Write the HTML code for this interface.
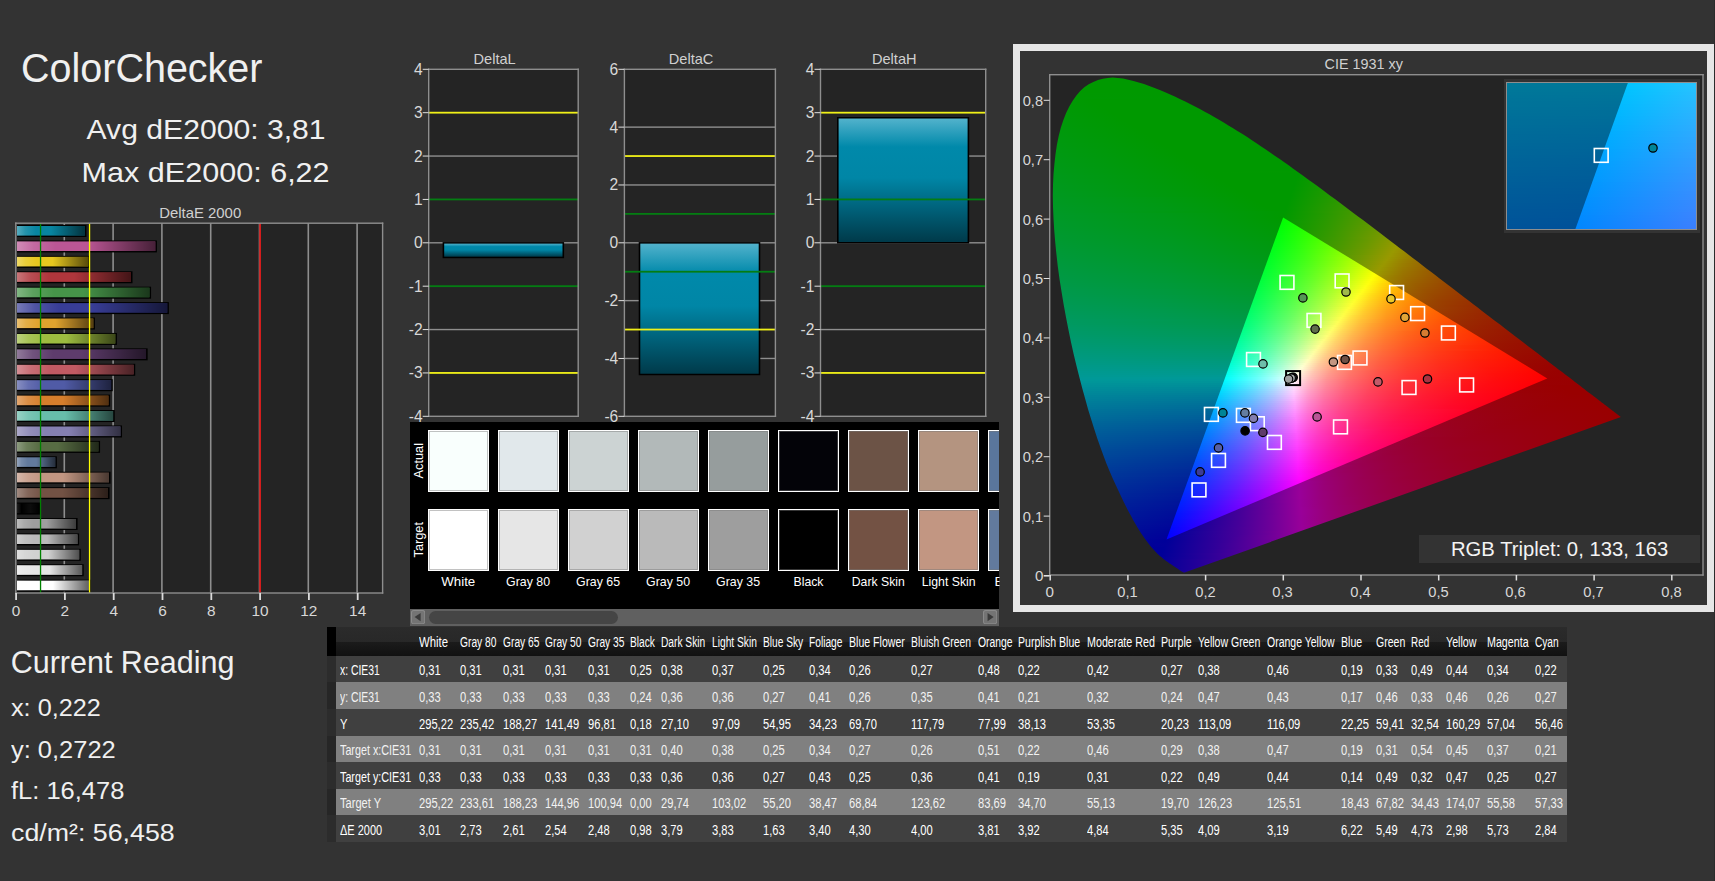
<!DOCTYPE html>
<html><head><meta charset="utf-8"><title>ColorChecker</title><style>
html,body{margin:0;padding:0}
body{width:1715px;height:881px;overflow:hidden;position:relative;background:#333333;font-family:"Liberation Sans",sans-serif;}
.t{position:absolute;white-space:pre;display:block}
.a{position:absolute;display:block}
.sw{position:absolute;width:60.5px;height:61.5px;box-sizing:border-box;border:1.3px solid #fff;box-shadow:inset 0 0 0 1px rgba(120,120,120,.45)}
.c{position:absolute;white-space:pre;font-size:15.2px;line-height:17.46px;transform:scaleX(0.735);transform-origin:0 0;color:#fff}
.g{position:absolute;left:0;top:0;width:653px;height:500px}.g i{display:block;height:2px}
.h{position:absolute;left:0;top:0;width:189.2px;height:146.5px;overflow:hidden}.h i{display:block;height:3px}
</style></head><body>
<span class="t" style="left:21.00px;top:45.60px;font-size:40px;line-height:45.96px;color:#f0f0f0;transform:scaleX(0.9876);transform-origin:0 0;">ColorChecker</span>
<span class="t" style="left:96.93px;top:114.31px;font-size:27.5px;line-height:31.60px;color:#f0f0f0;transform:scaleX(1.0956);transform-origin:50% 0;">Avg dE2000: 3,81</span>
<span class="t" style="left:94.40px;top:156.71px;font-size:27.5px;line-height:31.60px;color:#f0f0f0;transform:scaleX(1.1111);transform-origin:50% 0;">Max dE2000: 6,22</span>
<span class="t" style="left:159.50px;top:204.59px;font-size:14.6px;line-height:16.78px;color:#d0d0d0;transform:scaleX(1.0213);transform-origin:50% 0;">DeltaE 2000</span>
<span class="t" style="left:11.79px;top:602.06px;font-size:15.4px;line-height:17.69px;color:#d8d8d8;">0</span>
<span class="t" style="left:60.59px;top:602.06px;font-size:15.4px;line-height:17.69px;color:#d8d8d8;">2</span>
<span class="t" style="left:109.39px;top:602.06px;font-size:15.4px;line-height:17.69px;color:#d8d8d8;">4</span>
<span class="t" style="left:158.19px;top:602.06px;font-size:15.4px;line-height:17.69px;color:#d8d8d8;">6</span>
<span class="t" style="left:206.99px;top:602.06px;font-size:15.4px;line-height:17.69px;color:#d8d8d8;">8</span>
<span class="t" style="left:251.48px;top:602.06px;font-size:15.4px;line-height:17.69px;color:#d8d8d8;">10</span>
<span class="t" style="left:300.28px;top:602.06px;font-size:15.4px;line-height:17.69px;color:#d8d8d8;">12</span>
<span class="t" style="left:349.08px;top:602.06px;font-size:15.4px;line-height:17.69px;color:#d8d8d8;">14</span>
<span class="t" style="left:473.49px;top:50.99px;font-size:14.6px;line-height:16.78px;color:#d0d0d0;">DeltaL</span>
<span class="t" style="left:408.72px;top:407.78px;font-size:15.6px;line-height:17.92px;color:#d8d8d8;">-4</span>
<span class="t" style="left:408.72px;top:364.41px;font-size:15.6px;line-height:17.92px;color:#d8d8d8;">-3</span>
<span class="t" style="left:408.72px;top:321.03px;font-size:15.6px;line-height:17.92px;color:#d8d8d8;">-2</span>
<span class="t" style="left:408.72px;top:277.66px;font-size:15.6px;line-height:17.92px;color:#d8d8d8;">-1</span>
<span class="t" style="left:413.88px;top:234.28px;font-size:15.6px;line-height:17.92px;color:#d8d8d8;">0</span>
<span class="t" style="left:413.88px;top:190.91px;font-size:15.6px;line-height:17.92px;color:#d8d8d8;">1</span>
<span class="t" style="left:413.88px;top:147.53px;font-size:15.6px;line-height:17.92px;color:#d8d8d8;">2</span>
<span class="t" style="left:413.88px;top:104.16px;font-size:15.6px;line-height:17.92px;color:#d8d8d8;">3</span>
<span class="t" style="left:413.88px;top:60.78px;font-size:15.6px;line-height:17.92px;color:#d8d8d8;">4</span>
<span class="t" style="left:668.74px;top:50.99px;font-size:14.6px;line-height:16.78px;color:#d0d0d0;">DeltaC</span>
<span class="t" style="left:604.42px;top:407.78px;font-size:15.6px;line-height:17.92px;color:#d8d8d8;">-6</span>
<span class="t" style="left:604.42px;top:349.95px;font-size:15.6px;line-height:17.92px;color:#d8d8d8;">-4</span>
<span class="t" style="left:604.42px;top:292.12px;font-size:15.6px;line-height:17.92px;color:#d8d8d8;">-2</span>
<span class="t" style="left:609.58px;top:234.28px;font-size:15.6px;line-height:17.92px;color:#d8d8d8;">0</span>
<span class="t" style="left:609.58px;top:176.45px;font-size:15.6px;line-height:17.92px;color:#d8d8d8;">2</span>
<span class="t" style="left:609.58px;top:118.62px;font-size:15.6px;line-height:17.92px;color:#d8d8d8;">4</span>
<span class="t" style="left:609.58px;top:60.78px;font-size:15.6px;line-height:17.92px;color:#d8d8d8;">6</span>
<span class="t" style="left:871.94px;top:50.99px;font-size:14.6px;line-height:16.78px;color:#d0d0d0;">DeltaH</span>
<span class="t" style="left:800.52px;top:407.78px;font-size:15.6px;line-height:17.92px;color:#d8d8d8;">-4</span>
<span class="t" style="left:800.52px;top:364.41px;font-size:15.6px;line-height:17.92px;color:#d8d8d8;">-3</span>
<span class="t" style="left:800.52px;top:321.03px;font-size:15.6px;line-height:17.92px;color:#d8d8d8;">-2</span>
<span class="t" style="left:800.52px;top:277.66px;font-size:15.6px;line-height:17.92px;color:#d8d8d8;">-1</span>
<span class="t" style="left:805.68px;top:234.28px;font-size:15.6px;line-height:17.92px;color:#d8d8d8;">0</span>
<span class="t" style="left:805.68px;top:190.91px;font-size:15.6px;line-height:17.92px;color:#d8d8d8;">1</span>
<span class="t" style="left:805.68px;top:147.53px;font-size:15.6px;line-height:17.92px;color:#d8d8d8;">2</span>
<span class="t" style="left:805.68px;top:104.16px;font-size:15.6px;line-height:17.92px;color:#d8d8d8;">3</span>
<span class="t" style="left:805.68px;top:60.78px;font-size:15.6px;line-height:17.92px;color:#d8d8d8;">4</span>
<svg class="a" style="left:0;top:0" width="1715" height="881" viewBox="0 0 1715 881"><defs><linearGradient id="ov" x1="0" y1="0" x2="1" y2="0"><stop offset="0" stop-color="#fff" stop-opacity=".32"/><stop offset=".12" stop-color="#fff" stop-opacity=".12"/><stop offset=".28" stop-color="#fff" stop-opacity="0"/><stop offset=".5" stop-color="#000" stop-opacity="0"/><stop offset="1" stop-color="#000" stop-opacity=".62"/></linearGradient><linearGradient id="ovk" x1="0" y1="0" x2="1" y2="0"><stop offset="0" stop-color="#fff" stop-opacity=".12"/><stop offset=".2" stop-color="#fff" stop-opacity="0"/><stop offset=".6" stop-color="#fff" stop-opacity=".05"/><stop offset="1" stop-color="#fff" stop-opacity="0"/></linearGradient><linearGradient id="vb" x1="0" y1="0" x2="0" y2="1"><stop offset="0" stop-color="#52b2cc"/><stop offset=".23" stop-color="#0089aa"/><stop offset=".48" stop-color="#0086a6"/><stop offset="1" stop-color="#003a4a"/></linearGradient></defs><rect x="15.80" y="223.20" width="366.80" height="369.80" fill="#242424"/><rect x="63.50" y="223.20" width="1.60" height="369.80" fill="#8e8e8e"/><rect x="112.30" y="223.20" width="1.60" height="369.80" fill="#8e8e8e"/><rect x="161.10" y="223.20" width="1.60" height="369.80" fill="#8e8e8e"/><rect x="209.90" y="223.20" width="1.60" height="369.80" fill="#8e8e8e"/><rect x="258.70" y="223.20" width="1.60" height="369.80" fill="#8e8e8e"/><rect x="307.50" y="223.20" width="1.60" height="369.80" fill="#8e8e8e"/><rect x="356.30" y="223.20" width="1.60" height="369.80" fill="#8e8e8e"/><rect x="17.00" y="579.66" width="73.54" height="12.00" fill="#000"/><rect x="17.00" y="580.66" width="71.94" height="9.60" fill="#ffffff"/><rect x="17.00" y="580.66" width="71.94" height="9.60" fill="url(#ov)"/><rect x="17.00" y="564.24" width="66.71" height="12.00" fill="#000"/><rect x="17.00" y="565.24" width="65.11" height="9.60" fill="#e6e6e6"/><rect x="17.00" y="565.24" width="65.11" height="9.60" fill="url(#ov)"/><rect x="17.00" y="548.82" width="63.78" height="12.00" fill="#000"/><rect x="17.00" y="549.82" width="62.18" height="9.60" fill="#d1d1d1"/><rect x="17.00" y="549.82" width="62.18" height="9.60" fill="url(#ov)"/><rect x="17.00" y="533.40" width="62.08" height="12.00" fill="#000"/><rect x="17.00" y="534.40" width="60.48" height="9.60" fill="#bababa"/><rect x="17.00" y="534.40" width="60.48" height="9.60" fill="url(#ov)"/><rect x="17.00" y="517.98" width="60.61" height="12.00" fill="#000"/><rect x="17.00" y="518.98" width="59.01" height="9.60" fill="#9e9e9e"/><rect x="17.00" y="518.98" width="59.01" height="9.60" fill="url(#ov)"/><rect x="17.00" y="502.56" width="24.01" height="12.00" fill="#000"/><rect x="17.00" y="503.56" width="22.41" height="9.60" fill="#000000"/><rect x="17.00" y="503.56" width="22.41" height="9.60" fill="url(#ovk)"/><rect x="17.00" y="487.14" width="92.58" height="12.00" fill="#000"/><rect x="17.00" y="488.14" width="90.98" height="9.60" fill="#735244"/><rect x="17.00" y="488.14" width="90.98" height="9.60" fill="url(#ov)"/><rect x="17.00" y="471.72" width="93.55" height="12.00" fill="#000"/><rect x="17.00" y="472.72" width="91.95" height="9.60" fill="#c29682"/><rect x="17.00" y="472.72" width="91.95" height="9.60" fill="url(#ov)"/><rect x="17.00" y="456.30" width="39.87" height="12.00" fill="#000"/><rect x="17.00" y="457.30" width="38.27" height="9.60" fill="#627a9d"/><rect x="17.00" y="457.30" width="38.27" height="9.60" fill="url(#ov)"/><rect x="17.00" y="440.88" width="83.06" height="12.00" fill="#000"/><rect x="17.00" y="441.88" width="81.46" height="9.60" fill="#576c43"/><rect x="17.00" y="441.88" width="81.46" height="9.60" fill="url(#ov)"/><rect x="17.00" y="425.46" width="105.02" height="12.00" fill="#000"/><rect x="17.00" y="426.46" width="103.42" height="9.60" fill="#8580b1"/><rect x="17.00" y="426.46" width="103.42" height="9.60" fill="url(#ov)"/><rect x="17.00" y="410.04" width="97.70" height="12.00" fill="#000"/><rect x="17.00" y="411.04" width="96.10" height="9.60" fill="#67bdaa"/><rect x="17.00" y="411.04" width="96.10" height="9.60" fill="url(#ov)"/><rect x="17.00" y="394.62" width="93.06" height="12.00" fill="#000"/><rect x="17.00" y="395.62" width="91.46" height="9.60" fill="#d67e2c"/><rect x="17.00" y="395.62" width="91.46" height="9.60" fill="url(#ov)"/><rect x="17.00" y="379.20" width="95.75" height="12.00" fill="#000"/><rect x="17.00" y="380.20" width="94.15" height="9.60" fill="#505ba6"/><rect x="17.00" y="380.20" width="94.15" height="9.60" fill="url(#ov)"/><rect x="17.00" y="363.78" width="118.20" height="12.00" fill="#000"/><rect x="17.00" y="364.78" width="116.60" height="9.60" fill="#c15a63"/><rect x="17.00" y="364.78" width="116.60" height="9.60" fill="url(#ov)"/><rect x="17.00" y="348.36" width="130.64" height="12.00" fill="#000"/><rect x="17.00" y="349.36" width="129.04" height="9.60" fill="#5e3c6c"/><rect x="17.00" y="349.36" width="129.04" height="9.60" fill="url(#ov)"/><rect x="17.00" y="332.94" width="99.90" height="12.00" fill="#000"/><rect x="17.00" y="333.94" width="98.30" height="9.60" fill="#9dbc40"/><rect x="17.00" y="333.94" width="98.30" height="9.60" fill="url(#ov)"/><rect x="17.00" y="317.52" width="77.94" height="12.00" fill="#000"/><rect x="17.00" y="318.52" width="76.34" height="9.60" fill="#e0a32e"/><rect x="17.00" y="318.52" width="76.34" height="9.60" fill="url(#ov)"/><rect x="17.00" y="302.10" width="151.87" height="12.00" fill="#000"/><rect x="17.00" y="303.10" width="150.27" height="9.60" fill="#383d96"/><rect x="17.00" y="303.10" width="150.27" height="9.60" fill="url(#ov)"/><rect x="17.00" y="286.68" width="134.06" height="12.00" fill="#000"/><rect x="17.00" y="287.68" width="132.46" height="9.60" fill="#469449"/><rect x="17.00" y="287.68" width="132.46" height="9.60" fill="url(#ov)"/><rect x="17.00" y="271.26" width="115.51" height="12.00" fill="#000"/><rect x="17.00" y="272.26" width="113.91" height="9.60" fill="#af363c"/><rect x="17.00" y="272.26" width="113.91" height="9.60" fill="url(#ov)"/><rect x="17.00" y="255.84" width="72.81" height="12.00" fill="#000"/><rect x="17.00" y="256.84" width="71.21" height="9.60" fill="#e7c71f"/><rect x="17.00" y="256.84" width="71.21" height="9.60" fill="url(#ov)"/><rect x="17.00" y="240.42" width="139.91" height="12.00" fill="#000"/><rect x="17.00" y="241.42" width="138.31" height="9.60" fill="#bb5695"/><rect x="17.00" y="241.42" width="138.31" height="9.60" fill="url(#ov)"/><rect x="17.00" y="225.00" width="69.40" height="12.00" fill="#000"/><rect x="17.00" y="226.00" width="67.80" height="9.60" fill="#0885a1"/><rect x="17.00" y="226.00" width="67.80" height="9.60" fill="url(#ov)"/><rect x="39.90" y="223.20" width="1.30" height="369.80" fill="#008000"/><rect x="88.90" y="223.20" width="1.30" height="369.80" fill="#ffff00"/><rect x="259.20" y="223.20" width="1.80" height="369.80" fill="#d41c1c"/><rect x="15.10" y="222.50" width="368.20" height="1.40" fill="#8e8e8e"/><rect x="15.10" y="592.30" width="368.20" height="1.40" fill="#8e8e8e"/><rect x="15.10" y="222.50" width="1.40" height="371.20" fill="#8e8e8e"/><rect x="381.90" y="222.50" width="1.40" height="371.20" fill="#8e8e8e"/><rect x="15.20" y="593.00" width="1.80" height="7.00" fill="#dcdcdc"/><rect x="64.00" y="593.00" width="1.80" height="7.00" fill="#dcdcdc"/><rect x="112.80" y="593.00" width="1.80" height="7.00" fill="#dcdcdc"/><rect x="161.60" y="593.00" width="1.80" height="7.00" fill="#dcdcdc"/><rect x="210.40" y="593.00" width="1.80" height="7.00" fill="#dcdcdc"/><rect x="259.20" y="593.00" width="1.80" height="7.00" fill="#dcdcdc"/><rect x="308.00" y="593.00" width="1.80" height="7.00" fill="#dcdcdc"/><rect x="356.80" y="593.00" width="1.80" height="7.00" fill="#dcdcdc"/><rect x="428.70" y="69.30" width="149.50" height="347.00" fill="#242424"/><rect x="428.70" y="155.35" width="149.50" height="1.40" fill="#8e8e8e"/><rect x="428.70" y="242.10" width="149.50" height="1.40" fill="#8e8e8e"/><rect x="428.70" y="328.85" width="149.50" height="1.40" fill="#8e8e8e"/><rect x="442.60" y="242.10" width="121.50" height="16.10" fill="#000"/><rect x="444.20" y="243.60" width="118.30" height="13.10" fill="url(#vb)"/><rect x="428.70" y="111.78" width="149.50" height="1.80" fill="#f0f018"/><rect x="428.70" y="372.03" width="149.50" height="1.80" fill="#f0f018"/><rect x="428.70" y="198.53" width="149.50" height="1.80" fill="#047d12"/><rect x="428.70" y="285.28" width="149.50" height="1.80" fill="#047d12"/><rect x="428.00" y="68.60" width="150.90" height="1.40" fill="#8e8e8e"/><rect x="428.00" y="415.60" width="150.90" height="1.40" fill="#8e8e8e"/><rect x="428.00" y="68.60" width="1.40" height="348.40" fill="#8e8e8e"/><rect x="577.50" y="68.60" width="1.40" height="348.40" fill="#8e8e8e"/><rect x="422.70" y="415.80" width="6.00" height="1.00" fill="#e0e0e0"/><rect x="422.70" y="372.43" width="6.00" height="1.00" fill="#e0e0e0"/><rect x="422.70" y="329.05" width="6.00" height="1.00" fill="#e0e0e0"/><rect x="422.70" y="285.68" width="6.00" height="1.00" fill="#e0e0e0"/><rect x="422.70" y="242.30" width="6.00" height="1.00" fill="#e0e0e0"/><rect x="422.70" y="198.93" width="6.00" height="1.00" fill="#e0e0e0"/><rect x="422.70" y="155.55" width="6.00" height="1.00" fill="#e0e0e0"/><rect x="422.70" y="112.18" width="6.00" height="1.00" fill="#e0e0e0"/><rect x="422.70" y="68.80" width="6.00" height="1.00" fill="#e0e0e0"/><rect x="624.40" y="69.30" width="151.00" height="347.00" fill="#242424"/><rect x="624.40" y="126.43" width="151.00" height="1.40" fill="#8e8e8e"/><rect x="624.40" y="184.27" width="151.00" height="1.40" fill="#8e8e8e"/><rect x="624.40" y="242.10" width="151.00" height="1.40" fill="#8e8e8e"/><rect x="624.40" y="299.93" width="151.00" height="1.40" fill="#8e8e8e"/><rect x="624.40" y="357.77" width="151.00" height="1.40" fill="#8e8e8e"/><rect x="638.70" y="242.10" width="121.60" height="133.14" fill="#000"/><rect x="640.30" y="243.60" width="118.40" height="130.14" fill="url(#vb)"/><rect x="624.40" y="155.15" width="151.00" height="1.80" fill="#f0f018"/><rect x="624.40" y="328.65" width="151.00" height="1.80" fill="#f0f018"/><rect x="624.40" y="212.98" width="151.00" height="1.80" fill="#047d12"/><rect x="624.40" y="270.82" width="151.00" height="1.80" fill="#047d12"/><rect x="623.70" y="68.60" width="152.40" height="1.40" fill="#8e8e8e"/><rect x="623.70" y="415.60" width="152.40" height="1.40" fill="#8e8e8e"/><rect x="623.70" y="68.60" width="1.40" height="348.40" fill="#8e8e8e"/><rect x="774.70" y="68.60" width="1.40" height="348.40" fill="#8e8e8e"/><rect x="618.40" y="415.80" width="6.00" height="1.00" fill="#e0e0e0"/><rect x="618.40" y="357.97" width="6.00" height="1.00" fill="#e0e0e0"/><rect x="618.40" y="300.13" width="6.00" height="1.00" fill="#e0e0e0"/><rect x="618.40" y="242.30" width="6.00" height="1.00" fill="#e0e0e0"/><rect x="618.40" y="184.47" width="6.00" height="1.00" fill="#e0e0e0"/><rect x="618.40" y="126.63" width="6.00" height="1.00" fill="#e0e0e0"/><rect x="618.40" y="68.80" width="6.00" height="1.00" fill="#e0e0e0"/><rect x="820.50" y="69.30" width="165.20" height="347.00" fill="#242424"/><rect x="820.50" y="155.35" width="165.20" height="1.40" fill="#8e8e8e"/><rect x="820.50" y="242.10" width="165.20" height="1.40" fill="#8e8e8e"/><rect x="820.50" y="328.85" width="165.20" height="1.40" fill="#8e8e8e"/><rect x="837.00" y="117.01" width="132.20" height="126.49" fill="#000"/><rect x="838.60" y="118.51" width="129.00" height="123.49" fill="url(#vb)"/><rect x="820.50" y="111.78" width="165.20" height="1.80" fill="#f0f018"/><rect x="820.50" y="372.03" width="165.20" height="1.80" fill="#f0f018"/><rect x="820.50" y="198.53" width="165.20" height="1.80" fill="#047d12"/><rect x="820.50" y="285.28" width="165.20" height="1.80" fill="#047d12"/><rect x="819.80" y="68.60" width="166.60" height="1.40" fill="#8e8e8e"/><rect x="819.80" y="415.60" width="166.60" height="1.40" fill="#8e8e8e"/><rect x="819.80" y="68.60" width="1.40" height="348.40" fill="#8e8e8e"/><rect x="985.00" y="68.60" width="1.40" height="348.40" fill="#8e8e8e"/><rect x="814.50" y="415.80" width="6.00" height="1.00" fill="#e0e0e0"/><rect x="814.50" y="372.43" width="6.00" height="1.00" fill="#e0e0e0"/><rect x="814.50" y="329.05" width="6.00" height="1.00" fill="#e0e0e0"/><rect x="814.50" y="285.68" width="6.00" height="1.00" fill="#e0e0e0"/><rect x="814.50" y="242.30" width="6.00" height="1.00" fill="#e0e0e0"/><rect x="814.50" y="198.93" width="6.00" height="1.00" fill="#e0e0e0"/><rect x="814.50" y="155.55" width="6.00" height="1.00" fill="#e0e0e0"/><rect x="814.50" y="112.18" width="6.00" height="1.00" fill="#e0e0e0"/><rect x="814.50" y="68.80" width="6.00" height="1.00" fill="#e0e0e0"/></svg>
<div class="a" style="left:410px;top:422px;width:589px;height:204px;background:#000;overflow:hidden">
<div class="sw" style="left:18.0px;top:8px;background:rgb(249, 255, 253)"></div>
<div class="sw" style="left:18.0px;top:87.3px;background:rgb(255, 255, 255)"></div>
<div class="sw" style="left:88.0px;top:8px;background:rgb(225, 232, 235)"></div>
<div class="sw" style="left:88.0px;top:87.3px;background:rgb(230, 230, 230)"></div>
<div class="sw" style="left:158.1px;top:8px;background:rgb(204, 211, 211)"></div>
<div class="sw" style="left:158.1px;top:87.3px;background:rgb(209, 209, 209)"></div>
<div class="sw" style="left:228.1px;top:8px;background:rgb(178, 185, 185)"></div>
<div class="sw" style="left:228.1px;top:87.3px;background:rgb(186, 186, 186)"></div>
<div class="sw" style="left:298.2px;top:8px;background:rgb(150, 157, 157)"></div>
<div class="sw" style="left:298.2px;top:87.3px;background:rgb(158, 158, 158)"></div>
<div class="sw" style="left:368.2px;top:8px;background:rgb(3, 3, 8)"></div>
<div class="sw" style="left:368.2px;top:87.3px;background:rgb(0, 0, 0)"></div>
<div class="sw" style="left:438.3px;top:8px;background:rgb(108, 83, 70)"></div>
<div class="sw" style="left:438.3px;top:87.3px;background:rgb(115, 82, 68)"></div>
<div class="sw" style="left:508.3px;top:8px;background:rgb(180, 148, 128)"></div>
<div class="sw" style="left:508.3px;top:87.3px;background:rgb(194, 150, 130)"></div>
<div class="sw" style="left:578.4px;top:8px;background:rgb(90, 118, 156)"></div>
<div class="sw" style="left:578.4px;top:87.3px;background:rgb(98, 122, 157)"></div>
</div>
<span class="t" style="left:441.05px;top:573.78px;font-size:13.5px;line-height:15.51px;color:#fff;transform:scaleX(0.9853);transform-origin:50% 0;">White</span>
<span class="t" style="left:504.34px;top:573.78px;font-size:13.5px;line-height:15.51px;color:#fff;transform:scaleX(0.9163);transform-origin:50% 0;">Gray 80</span>
<span class="t" style="left:574.39px;top:573.78px;font-size:13.5px;line-height:15.51px;color:#fff;transform:scaleX(0.9163);transform-origin:50% 0;">Gray 65</span>
<span class="t" style="left:644.44px;top:573.78px;font-size:13.5px;line-height:15.51px;color:#fff;transform:scaleX(0.9163);transform-origin:50% 0;">Gray 50</span>
<span class="t" style="left:714.49px;top:573.78px;font-size:13.5px;line-height:15.51px;color:#fff;transform:scaleX(0.9163);transform-origin:50% 0;">Gray 35</span>
<span class="t" style="left:792.04px;top:573.78px;font-size:13.5px;line-height:15.51px;color:#fff;transform:scaleX(0.9088);transform-origin:50% 0;">Black</span>
<span class="t" style="left:849.34px;top:573.78px;font-size:13.5px;line-height:15.51px;color:#fff;transform:scaleX(0.9057);transform-origin:50% 0;">Dark Skin</span>
<span class="t" style="left:919.01px;top:573.78px;font-size:13.5px;line-height:15.51px;color:#fff;transform:scaleX(0.9109);transform-origin:50% 0;">Light Skin</span>
<span class="t" style="left:994.50px;top:573.78px;font-size:13.5px;line-height:15.51px;color:#fff;clip-path:inset(0 4px 0 0);">E</span>
<span class="t" style="left:400.04px;top:453.24px;font-size:13.5px;line-height:15.51px;color:#fff;transform:rotate(-90deg) scaleX(0.946);transform-origin:50% 50%">Actual</span>
<span class="t" style="left:400.04px;top:532.24px;font-size:13.5px;line-height:15.51px;color:#fff;transform:rotate(-90deg) scaleX(0.946);transform-origin:50% 50%">Target</span>
<div class="a" style="left:410px;top:609px;width:589px;height:17px;background:#606060"></div>
<div class="a" style="left:428.5px;top:610.5px;width:189px;height:13.6px;background:#454545;border-radius:7px"></div>
<svg class="a" style="left:410.8px;top:610.2px" width="14.2" height="14.2" viewBox="0 0 14 14"><rect x="0.5" y="0.5" width="13" height="13" rx="2" fill="#747474" stroke="#8a8a8a"/><polygon points="9.5,3 9.5,11 3.5,7" fill="#3a3a3a"/></svg>
<svg class="a" style="left:982.9px;top:610.2px" width="14.2" height="14.2" viewBox="0 0 14 14"><rect x="0.5" y="0.5" width="13" height="13" rx="2" fill="#747474" stroke="#8a8a8a"/><polygon points="4.5,3 4.5,11 10.5,7" fill="#3a3a3a"/></svg>
<div class="a" style="left:327.0px;top:627.0px;width:1239.7px;height:28.9px;background:linear-gradient(180deg,#2b2b2b 0,#282828 51%,#1b1b1b 52%,#111 100%)"></div>
<div class="a" style="left:327.0px;top:627.0px;width:9px;height:28.9px;background:#000"></div>
<span class="c" style="left:419.2px;top:633.44px;transform:scaleX(0.7465)">White</span>
<span class="c" style="left:460.2px;top:633.44px;transform:scaleX(0.6747)">Gray 80</span>
<span class="c" style="left:502.8px;top:633.44px;transform:scaleX(0.6747)">Gray 65</span>
<span class="c" style="left:545.2px;top:633.44px;transform:scaleX(0.6747)">Gray 50</span>
<span class="c" style="left:587.6px;top:633.44px;transform:scaleX(0.6747)">Gray 35</span>
<span class="c" style="left:630.2px;top:633.44px;transform:scaleX(0.6704)">Black</span>
<span class="c" style="left:661.1px;top:633.44px;transform:scaleX(0.6717)">Dark Skin</span>
<span class="c" style="left:711.8px;top:633.44px;transform:scaleX(0.6734)">Light Skin</span>
<span class="c" style="left:763.3px;top:633.44px;transform:scaleX(0.6697)">Blue Sky</span>
<span class="c" style="left:809.2px;top:633.44px;transform:scaleX(0.6718)">Foliage</span>
<span class="c" style="left:848.7px;top:633.44px;transform:scaleX(0.6956)">Blue Flower</span>
<span class="c" style="left:911.1px;top:633.44px;transform:scaleX(0.6829)">Bluish Green</span>
<span class="c" style="left:977.7px;top:633.44px;transform:scaleX(0.6822)">Orange</span>
<span class="c" style="left:1018.3px;top:633.44px;transform:scaleX(0.6945)">Purplish Blue</span>
<span class="c" style="left:1086.7px;top:633.44px;transform:scaleX(0.7058)">Moderate Red</span>
<span class="c" style="left:1161.3px;top:633.44px;transform:scaleX(0.7010)">Purple</span>
<span class="c" style="left:1198.3px;top:633.44px;transform:scaleX(0.6934)">Yellow Green</span>
<span class="c" style="left:1266.8px;top:633.44px;transform:scaleX(0.6904)">Orange Yellow</span>
<span class="c" style="left:1340.8px;top:633.44px;transform:scaleX(0.6946)">Blue</span>
<span class="c" style="left:1375.6px;top:633.44px;transform:scaleX(0.6937)">Green</span>
<span class="c" style="left:1410.5px;top:633.44px;transform:scaleX(0.6506)">Red</span>
<span class="c" style="left:1445.7px;top:633.44px;transform:scaleX(0.7031)">Yellow</span>
<span class="c" style="left:1486.9px;top:633.44px;transform:scaleX(0.7044)">Magenta</span>
<span class="c" style="left:1534.8px;top:633.44px;transform:scaleX(0.6658)">Cyan</span>
<div class="a" style="left:327.0px;top:655.90px;width:1239.7px;height:26.57px;background:#404040"></div>
<div class="a" style="left:327.0px;top:655.90px;width:9px;height:26.57px;background:#2c2c2c"></div>
<span class="c" style="left:339.6px;top:661.44px;color:#fff;transform:scaleX(0.6822)">x: CIE31</span>
<span class="c" style="left:419.2px;top:661.44px;color:#fff">0,31</span>
<span class="c" style="left:460.2px;top:661.44px;color:#fff">0,31</span>
<span class="c" style="left:502.8px;top:661.44px;color:#fff">0,31</span>
<span class="c" style="left:545.2px;top:661.44px;color:#fff">0,31</span>
<span class="c" style="left:587.6px;top:661.44px;color:#fff">0,31</span>
<span class="c" style="left:630.2px;top:661.44px;color:#fff">0,25</span>
<span class="c" style="left:661.1px;top:661.44px;color:#fff">0,38</span>
<span class="c" style="left:711.8px;top:661.44px;color:#fff">0,37</span>
<span class="c" style="left:763.3px;top:661.44px;color:#fff">0,25</span>
<span class="c" style="left:809.2px;top:661.44px;color:#fff">0,34</span>
<span class="c" style="left:848.7px;top:661.44px;color:#fff">0,26</span>
<span class="c" style="left:911.1px;top:661.44px;color:#fff">0,27</span>
<span class="c" style="left:977.7px;top:661.44px;color:#fff">0,48</span>
<span class="c" style="left:1018.3px;top:661.44px;color:#fff">0,22</span>
<span class="c" style="left:1086.7px;top:661.44px;color:#fff">0,42</span>
<span class="c" style="left:1161.3px;top:661.44px;color:#fff">0,27</span>
<span class="c" style="left:1198.3px;top:661.44px;color:#fff">0,38</span>
<span class="c" style="left:1266.8px;top:661.44px;color:#fff">0,46</span>
<span class="c" style="left:1340.8px;top:661.44px;color:#fff">0,19</span>
<span class="c" style="left:1375.6px;top:661.44px;color:#fff">0,33</span>
<span class="c" style="left:1410.5px;top:661.44px;color:#fff">0,49</span>
<span class="c" style="left:1445.7px;top:661.44px;color:#fff">0,44</span>
<span class="c" style="left:1486.9px;top:661.44px;color:#fff">0,34</span>
<span class="c" style="left:1534.8px;top:661.44px;color:#fff">0,22</span>
<div class="a" style="left:327.0px;top:682.47px;width:1239.7px;height:26.57px;background:#808080"></div>
<div class="a" style="left:327.0px;top:682.47px;width:9px;height:26.57px;background:#262626"></div>
<span class="c" style="left:339.6px;top:688.01px;color:#f2f2f2;transform:scaleX(0.6822)">y: CIE31</span>
<span class="c" style="left:419.2px;top:688.01px;color:#f2f2f2">0,33</span>
<span class="c" style="left:460.2px;top:688.01px;color:#f2f2f2">0,33</span>
<span class="c" style="left:502.8px;top:688.01px;color:#f2f2f2">0,33</span>
<span class="c" style="left:545.2px;top:688.01px;color:#f2f2f2">0,33</span>
<span class="c" style="left:587.6px;top:688.01px;color:#f2f2f2">0,33</span>
<span class="c" style="left:630.2px;top:688.01px;color:#f2f2f2">0,24</span>
<span class="c" style="left:661.1px;top:688.01px;color:#f2f2f2">0,36</span>
<span class="c" style="left:711.8px;top:688.01px;color:#f2f2f2">0,36</span>
<span class="c" style="left:763.3px;top:688.01px;color:#f2f2f2">0,27</span>
<span class="c" style="left:809.2px;top:688.01px;color:#f2f2f2">0,41</span>
<span class="c" style="left:848.7px;top:688.01px;color:#f2f2f2">0,26</span>
<span class="c" style="left:911.1px;top:688.01px;color:#f2f2f2">0,35</span>
<span class="c" style="left:977.7px;top:688.01px;color:#f2f2f2">0,41</span>
<span class="c" style="left:1018.3px;top:688.01px;color:#f2f2f2">0,21</span>
<span class="c" style="left:1086.7px;top:688.01px;color:#f2f2f2">0,32</span>
<span class="c" style="left:1161.3px;top:688.01px;color:#f2f2f2">0,24</span>
<span class="c" style="left:1198.3px;top:688.01px;color:#f2f2f2">0,47</span>
<span class="c" style="left:1266.8px;top:688.01px;color:#f2f2f2">0,43</span>
<span class="c" style="left:1340.8px;top:688.01px;color:#f2f2f2">0,17</span>
<span class="c" style="left:1375.6px;top:688.01px;color:#f2f2f2">0,46</span>
<span class="c" style="left:1410.5px;top:688.01px;color:#f2f2f2">0,33</span>
<span class="c" style="left:1445.7px;top:688.01px;color:#f2f2f2">0,46</span>
<span class="c" style="left:1486.9px;top:688.01px;color:#f2f2f2">0,26</span>
<span class="c" style="left:1534.8px;top:688.01px;color:#f2f2f2">0,27</span>
<div class="a" style="left:327.0px;top:709.04px;width:1239.7px;height:26.57px;background:#404040"></div>
<div class="a" style="left:327.0px;top:709.04px;width:9px;height:26.57px;background:#2c2c2c"></div>
<span class="c" style="left:339.6px;top:714.58px;color:#fff">Y</span>
<span class="c" style="left:419.2px;top:714.58px;color:#fff">295,22</span>
<span class="c" style="left:460.2px;top:714.58px;color:#fff">235,42</span>
<span class="c" style="left:502.8px;top:714.58px;color:#fff">188,27</span>
<span class="c" style="left:545.2px;top:714.58px;color:#fff">141,49</span>
<span class="c" style="left:587.6px;top:714.58px;color:#fff">96,81</span>
<span class="c" style="left:630.2px;top:714.58px;color:#fff">0,18</span>
<span class="c" style="left:661.1px;top:714.58px;color:#fff">27,10</span>
<span class="c" style="left:711.8px;top:714.58px;color:#fff">97,09</span>
<span class="c" style="left:763.3px;top:714.58px;color:#fff">54,95</span>
<span class="c" style="left:809.2px;top:714.58px;color:#fff">34,23</span>
<span class="c" style="left:848.7px;top:714.58px;color:#fff">69,70</span>
<span class="c" style="left:911.1px;top:714.58px;color:#fff">117,79</span>
<span class="c" style="left:977.7px;top:714.58px;color:#fff">77,99</span>
<span class="c" style="left:1018.3px;top:714.58px;color:#fff">38,13</span>
<span class="c" style="left:1086.7px;top:714.58px;color:#fff">53,35</span>
<span class="c" style="left:1161.3px;top:714.58px;color:#fff">20,23</span>
<span class="c" style="left:1198.3px;top:714.58px;color:#fff">113,09</span>
<span class="c" style="left:1266.8px;top:714.58px;color:#fff">116,09</span>
<span class="c" style="left:1340.8px;top:714.58px;color:#fff">22,25</span>
<span class="c" style="left:1375.6px;top:714.58px;color:#fff">59,41</span>
<span class="c" style="left:1410.5px;top:714.58px;color:#fff">32,54</span>
<span class="c" style="left:1445.7px;top:714.58px;color:#fff">160,29</span>
<span class="c" style="left:1486.9px;top:714.58px;color:#fff">57,04</span>
<span class="c" style="left:1534.8px;top:714.58px;color:#fff">56,46</span>
<div class="a" style="left:327.0px;top:735.61px;width:1239.7px;height:26.57px;background:#808080"></div>
<div class="a" style="left:327.0px;top:735.61px;width:9px;height:26.57px;background:#262626"></div>
<span class="c" style="left:339.6px;top:741.15px;color:#f2f2f2;transform:scaleX(0.7089)">Target x:CIE31</span>
<span class="c" style="left:419.2px;top:741.15px;color:#f2f2f2">0,31</span>
<span class="c" style="left:460.2px;top:741.15px;color:#f2f2f2">0,31</span>
<span class="c" style="left:502.8px;top:741.15px;color:#f2f2f2">0,31</span>
<span class="c" style="left:545.2px;top:741.15px;color:#f2f2f2">0,31</span>
<span class="c" style="left:587.6px;top:741.15px;color:#f2f2f2">0,31</span>
<span class="c" style="left:630.2px;top:741.15px;color:#f2f2f2">0,31</span>
<span class="c" style="left:661.1px;top:741.15px;color:#f2f2f2">0,40</span>
<span class="c" style="left:711.8px;top:741.15px;color:#f2f2f2">0,38</span>
<span class="c" style="left:763.3px;top:741.15px;color:#f2f2f2">0,25</span>
<span class="c" style="left:809.2px;top:741.15px;color:#f2f2f2">0,34</span>
<span class="c" style="left:848.7px;top:741.15px;color:#f2f2f2">0,27</span>
<span class="c" style="left:911.1px;top:741.15px;color:#f2f2f2">0,26</span>
<span class="c" style="left:977.7px;top:741.15px;color:#f2f2f2">0,51</span>
<span class="c" style="left:1018.3px;top:741.15px;color:#f2f2f2">0,22</span>
<span class="c" style="left:1086.7px;top:741.15px;color:#f2f2f2">0,46</span>
<span class="c" style="left:1161.3px;top:741.15px;color:#f2f2f2">0,29</span>
<span class="c" style="left:1198.3px;top:741.15px;color:#f2f2f2">0,38</span>
<span class="c" style="left:1266.8px;top:741.15px;color:#f2f2f2">0,47</span>
<span class="c" style="left:1340.8px;top:741.15px;color:#f2f2f2">0,19</span>
<span class="c" style="left:1375.6px;top:741.15px;color:#f2f2f2">0,31</span>
<span class="c" style="left:1410.5px;top:741.15px;color:#f2f2f2">0,54</span>
<span class="c" style="left:1445.7px;top:741.15px;color:#f2f2f2">0,45</span>
<span class="c" style="left:1486.9px;top:741.15px;color:#f2f2f2">0,37</span>
<span class="c" style="left:1534.8px;top:741.15px;color:#f2f2f2">0,21</span>
<div class="a" style="left:327.0px;top:762.18px;width:1239.7px;height:26.57px;background:#404040"></div>
<div class="a" style="left:327.0px;top:762.18px;width:9px;height:26.57px;background:#2c2c2c"></div>
<span class="c" style="left:339.6px;top:767.72px;color:#fff;transform:scaleX(0.7089)">Target y:CIE31</span>
<span class="c" style="left:419.2px;top:767.72px;color:#fff">0,33</span>
<span class="c" style="left:460.2px;top:767.72px;color:#fff">0,33</span>
<span class="c" style="left:502.8px;top:767.72px;color:#fff">0,33</span>
<span class="c" style="left:545.2px;top:767.72px;color:#fff">0,33</span>
<span class="c" style="left:587.6px;top:767.72px;color:#fff">0,33</span>
<span class="c" style="left:630.2px;top:767.72px;color:#fff">0,33</span>
<span class="c" style="left:661.1px;top:767.72px;color:#fff">0,36</span>
<span class="c" style="left:711.8px;top:767.72px;color:#fff">0,36</span>
<span class="c" style="left:763.3px;top:767.72px;color:#fff">0,27</span>
<span class="c" style="left:809.2px;top:767.72px;color:#fff">0,43</span>
<span class="c" style="left:848.7px;top:767.72px;color:#fff">0,25</span>
<span class="c" style="left:911.1px;top:767.72px;color:#fff">0,36</span>
<span class="c" style="left:977.7px;top:767.72px;color:#fff">0,41</span>
<span class="c" style="left:1018.3px;top:767.72px;color:#fff">0,19</span>
<span class="c" style="left:1086.7px;top:767.72px;color:#fff">0,31</span>
<span class="c" style="left:1161.3px;top:767.72px;color:#fff">0,22</span>
<span class="c" style="left:1198.3px;top:767.72px;color:#fff">0,49</span>
<span class="c" style="left:1266.8px;top:767.72px;color:#fff">0,44</span>
<span class="c" style="left:1340.8px;top:767.72px;color:#fff">0,14</span>
<span class="c" style="left:1375.6px;top:767.72px;color:#fff">0,49</span>
<span class="c" style="left:1410.5px;top:767.72px;color:#fff">0,32</span>
<span class="c" style="left:1445.7px;top:767.72px;color:#fff">0,47</span>
<span class="c" style="left:1486.9px;top:767.72px;color:#fff">0,25</span>
<span class="c" style="left:1534.8px;top:767.72px;color:#fff">0,27</span>
<div class="a" style="left:327.0px;top:788.75px;width:1239.7px;height:26.57px;background:#808080"></div>
<div class="a" style="left:327.0px;top:788.75px;width:9px;height:26.57px;background:#262626"></div>
<span class="c" style="left:339.6px;top:794.29px;color:#f2f2f2;transform:scaleX(0.7290)">Target Y</span>
<span class="c" style="left:419.2px;top:794.29px;color:#f2f2f2">295,22</span>
<span class="c" style="left:460.2px;top:794.29px;color:#f2f2f2">233,61</span>
<span class="c" style="left:502.8px;top:794.29px;color:#f2f2f2">188,23</span>
<span class="c" style="left:545.2px;top:794.29px;color:#f2f2f2">144,96</span>
<span class="c" style="left:587.6px;top:794.29px;color:#f2f2f2">100,94</span>
<span class="c" style="left:630.2px;top:794.29px;color:#f2f2f2">0,00</span>
<span class="c" style="left:661.1px;top:794.29px;color:#f2f2f2">29,74</span>
<span class="c" style="left:711.8px;top:794.29px;color:#f2f2f2">103,02</span>
<span class="c" style="left:763.3px;top:794.29px;color:#f2f2f2">55,20</span>
<span class="c" style="left:809.2px;top:794.29px;color:#f2f2f2">38,47</span>
<span class="c" style="left:848.7px;top:794.29px;color:#f2f2f2">68,84</span>
<span class="c" style="left:911.1px;top:794.29px;color:#f2f2f2">123,62</span>
<span class="c" style="left:977.7px;top:794.29px;color:#f2f2f2">83,69</span>
<span class="c" style="left:1018.3px;top:794.29px;color:#f2f2f2">34,70</span>
<span class="c" style="left:1086.7px;top:794.29px;color:#f2f2f2">55,13</span>
<span class="c" style="left:1161.3px;top:794.29px;color:#f2f2f2">19,70</span>
<span class="c" style="left:1198.3px;top:794.29px;color:#f2f2f2">126,23</span>
<span class="c" style="left:1266.8px;top:794.29px;color:#f2f2f2">125,51</span>
<span class="c" style="left:1340.8px;top:794.29px;color:#f2f2f2">18,43</span>
<span class="c" style="left:1375.6px;top:794.29px;color:#f2f2f2">67,82</span>
<span class="c" style="left:1410.5px;top:794.29px;color:#f2f2f2">34,43</span>
<span class="c" style="left:1445.7px;top:794.29px;color:#f2f2f2">174,07</span>
<span class="c" style="left:1486.9px;top:794.29px;color:#f2f2f2">55,58</span>
<span class="c" style="left:1534.8px;top:794.29px;color:#f2f2f2">57,33</span>
<div class="a" style="left:327.0px;top:815.32px;width:1239.7px;height:26.57px;background:#404040"></div>
<div class="a" style="left:327.0px;top:815.32px;width:9px;height:26.57px;background:#2c2c2c"></div>
<span class="c" style="left:339.6px;top:820.86px;color:#fff;transform:scaleX(0.7228)">ΔE 2000</span>
<span class="c" style="left:419.2px;top:820.86px;color:#fff">3,01</span>
<span class="c" style="left:460.2px;top:820.86px;color:#fff">2,73</span>
<span class="c" style="left:502.8px;top:820.86px;color:#fff">2,61</span>
<span class="c" style="left:545.2px;top:820.86px;color:#fff">2,54</span>
<span class="c" style="left:587.6px;top:820.86px;color:#fff">2,48</span>
<span class="c" style="left:630.2px;top:820.86px;color:#fff">0,98</span>
<span class="c" style="left:661.1px;top:820.86px;color:#fff">3,79</span>
<span class="c" style="left:711.8px;top:820.86px;color:#fff">3,83</span>
<span class="c" style="left:763.3px;top:820.86px;color:#fff">1,63</span>
<span class="c" style="left:809.2px;top:820.86px;color:#fff">3,40</span>
<span class="c" style="left:848.7px;top:820.86px;color:#fff">4,30</span>
<span class="c" style="left:911.1px;top:820.86px;color:#fff">4,00</span>
<span class="c" style="left:977.7px;top:820.86px;color:#fff">3,81</span>
<span class="c" style="left:1018.3px;top:820.86px;color:#fff">3,92</span>
<span class="c" style="left:1086.7px;top:820.86px;color:#fff">4,84</span>
<span class="c" style="left:1161.3px;top:820.86px;color:#fff">5,35</span>
<span class="c" style="left:1198.3px;top:820.86px;color:#fff">4,09</span>
<span class="c" style="left:1266.8px;top:820.86px;color:#fff">3,19</span>
<span class="c" style="left:1340.8px;top:820.86px;color:#fff">6,22</span>
<span class="c" style="left:1375.6px;top:820.86px;color:#fff">5,49</span>
<span class="c" style="left:1410.5px;top:820.86px;color:#fff">4,73</span>
<span class="c" style="left:1445.7px;top:820.86px;color:#fff">2,98</span>
<span class="c" style="left:1486.9px;top:820.86px;color:#fff">5,73</span>
<span class="c" style="left:1534.8px;top:820.86px;color:#fff">2,84</span>
<span class="t" style="left:10.70px;top:645.10px;font-size:30.5px;line-height:35.04px;color:#f0f0f0;">Current Reading</span>
<span class="t" style="left:10.70px;top:693.50px;font-size:24.2px;line-height:27.81px;color:#f0f0f0;transform:scaleX(1.0430);transform-origin:0 0;">x: 0,222</span>
<span class="t" style="left:10.70px;top:735.80px;font-size:24.2px;line-height:27.81px;color:#f0f0f0;transform:scaleX(1.0523);transform-origin:0 0;">y: 0,2722</span>
<span class="t" style="left:10.70px;top:777.30px;font-size:24.2px;line-height:27.81px;color:#f0f0f0;transform:scaleX(1.0539);transform-origin:0 0;">fL: 16,478</span>
<span class="t" style="left:10.70px;top:819.40px;font-size:24.2px;line-height:27.81px;color:#f0f0f0;transform:scaleX(1.1067);transform-origin:0 0;">cd/m²: 56,458</span>
<div class="a" style="left:1013px;top:44px;width:701px;height:568px;background:#e6e6e6"></div><div class="a" style="left:1714px;top:0;width:1px;height:881px;background:#2b2b2b"></div>
<div class="a" style="left:1020px;top:51px;width:687px;height:554px;background:#333"></div>
<span class="t" style="left:1324.01px;top:56.39px;font-size:14.6px;line-height:16.78px;color:#d0d0d0;transform:scaleX(0.9876);transform-origin:50% 0;">CIE 1931 xy</span>
<div class="a" style="left:1050px;top:75px;width:653px;height:500px;background:#242424">
<div class="g" style="clip-path:polygon(135.3px 497.3px,135.3px 497.3px,135.3px 497.3px,135.2px 497.3px,135.2px 497.3px,135.2px 497.3px,135.2px 497.3px,135.2px 497.3px,135.2px 497.3px,135.1px 497.3px,135.1px 497.4px,135.1px 497.4px,135.0px 497.4px,135.0px 497.4px,135.0px 497.4px,135.0px 497.4px,134.9px 497.4px,134.9px 497.4px,134.9px 497.4px,134.9px 497.4px,134.8px 497.4px,134.8px 497.4px,134.7px 497.4px,134.7px 497.4px,134.7px 497.4px,134.6px 497.4px,134.6px 497.4px,134.5px 497.4px,134.5px 497.4px,134.5px 497.4px,134.4px 497.4px,134.4px 497.4px,134.3px 497.4px,134.3px 497.4px,134.2px 497.4px,134.2px 497.4px,134.1px 497.4px,134.1px 497.4px,134.0px 497.4px,133.9px 497.4px,133.9px 497.5px,133.8px 497.4px,133.7px 497.4px,133.6px 497.4px,133.6px 497.4px,133.5px 497.4px,133.4px 497.3px,133.3px 497.3px,133.2px 497.3px,133.1px 497.2px,132.9px 497.1px,132.8px 497.1px,132.6px 497.0px,132.5px 496.9px,132.3px 496.8px,132.2px 496.7px,132.0px 496.7px,131.8px 496.5px,131.6px 496.4px,131.4px 496.3px,131.2px 496.2px,131.0px 496.0px,130.8px 495.9px,130.5px 495.7px,130.2px 495.5px,130.0px 495.4px,129.7px 495.2px,129.4px 495.0px,129.1px 494.8px,128.8px 494.5px,128.4px 494.3px,128.1px 494.1px,127.7px 493.8px,127.4px 493.5px,127.0px 493.3px,126.6px 493.0px,126.1px 492.7px,125.7px 492.4px,125.2px 492.1px,124.7px 491.7px,124.1px 491.4px,123.5px 491.0px,122.9px 490.6px,122.3px 490.2px,121.7px 489.7px,121.0px 489.3px,120.3px 488.8px,119.6px 488.4px,118.9px 487.9px,118.1px 487.3px,117.3px 486.8px,116.5px 486.2px,115.6px 485.5px,114.7px 484.9px,113.8px 484.2px,112.9px 483.4px,111.9px 482.6px,110.9px 481.7px,109.9px 480.9px,108.8px 479.9px,107.7px 478.9px,106.5px 477.8px,105.3px 476.5px,104.0px 475.1px,102.6px 473.5px,101.1px 471.9px,99.6px 470.0px,98.1px 468.0px,96.4px 465.8px,94.7px 463.4px,93.0px 460.9px,91.1px 458.2px,89.2px 455.3px,87.2px 452.1px,85.2px 448.5px,83.0px 444.7px,80.8px 440.6px,78.4px 436.3px,76.0px 431.6px,73.5px 426.6px,70.9px 421.1px,68.2px 415.3px,65.4px 409.2px,62.4px 402.7px,59.4px 395.8px,56.4px 388.4px,53.4px 380.6px,50.4px 372.3px,47.3px 363.5px,44.3px 354.3px,41.3px 344.7px,38.2px 334.7px,35.3px 324.3px,32.3px 313.5px,29.3px 302.1px,26.4px 290.4px,23.5px 278.4px,20.8px 266.3px,18.3px 254.1px,15.9px 241.8px,13.6px 229.3px,11.5px 216.6px,9.5px 203.9px,7.8px 191.4px,6.4px 179.1px,5.2px 167.1px,4.2px 155.1px,3.5px 143.3px,3.0px 131.7px,2.8px 120.5px,3.0px 109.7px,3.5px 99.3px,4.4px 89.1px,5.5px 79.2px,6.9px 69.8px,8.7px 61.0px,10.8px 52.8px,13.3px 45.2px,16.1px 38.1px,19.3px 31.6px,22.7px 25.7px,26.4px 20.5px,30.2px 15.9px,34.3px 12.2px,38.7px 9.2px,43.3px 6.9px,48.0px 5.1px,52.9px 3.8px,57.7px 2.9px,62.7px 2.6px,67.8px 2.9px,73.0px 3.6px,78.2px 4.7px,83.5px 6.1px,88.7px 7.5px,94.0px 9.0px,99.3px 10.9px,104.6px 12.9px,109.8px 15.1px,115.1px 17.3px,120.2px 19.6px,125.3px 21.8px,130.3px 24.2px,135.2px 26.6px,140.1px 29.0px,145.0px 31.5px,149.9px 34.1px,154.7px 36.7px,159.5px 39.3px,164.2px 42.0px,169.0px 44.7px,173.7px 47.5px,178.4px 50.4px,183.1px 53.2px,187.8px 56.2px,192.5px 59.1px,197.2px 62.1px,201.9px 65.2px,206.5px 68.3px,211.2px 71.4px,215.8px 74.5px,220.5px 77.7px,225.1px 80.9px,229.7px 84.1px,234.3px 87.3px,239.0px 90.6px,243.6px 93.9px,248.2px 97.2px,252.8px 100.6px,257.5px 103.9px,262.1px 107.3px,266.7px 110.6px,271.4px 114.1px,276.0px 117.5px,280.6px 120.9px,285.3px 124.3px,289.9px 127.8px,294.5px 131.2px,299.1px 134.7px,303.7px 138.2px,308.4px 141.7px,313.0px 145.1px,317.6px 148.6px,322.2px 152.1px,326.8px 155.6px,331.4px 159.0px,335.9px 162.5px,340.5px 166.0px,345.1px 169.4px,349.6px 172.9px,354.1px 176.3px,358.6px 179.8px,363.1px 183.2px,367.6px 186.6px,372.0px 190.0px,376.4px 193.4px,380.9px 196.8px,385.2px 200.1px,389.6px 203.4px,393.9px 206.8px,398.2px 210.0px,402.5px 213.3px,406.7px 216.6px,410.9px 219.8px,415.1px 223.0px,419.2px 226.1px,423.3px 229.3px,427.4px 232.3px,431.4px 235.4px,435.3px 238.4px,439.3px 241.4px,443.1px 244.4px,446.9px 247.3px,450.7px 250.1px,454.4px 253.0px,458.0px 255.8px,461.6px 258.5px,465.1px 261.2px,468.5px 263.8px,471.8px 266.3px,475.0px 268.8px,478.1px 271.2px,481.2px 273.5px,484.2px 275.8px,487.2px 278.1px,490.1px 280.3px,492.9px 282.5px,495.7px 284.6px,498.5px 286.7px,501.1px 288.7px,503.7px 290.7px,506.1px 292.6px,508.5px 294.4px,510.8px 296.1px,513.1px 297.8px,515.2px 299.5px,517.3px 301.1px,519.4px 302.6px,521.3px 304.1px,523.2px 305.6px,525.0px 307.0px,526.7px 308.3px,528.4px 309.6px,530.1px 310.8px,531.6px 312.0px,533.1px 313.2px,534.6px 314.3px,535.9px 315.4px,537.3px 316.4px,538.6px 317.4px,539.8px 318.3px,541.0px 319.2px,542.2px 320.1px,543.3px 320.9px,544.4px 321.8px,545.4px 322.6px,546.4px 323.3px,547.3px 324.1px,548.3px 324.8px,549.2px 325.4px,550.0px 326.1px,550.9px 326.8px,551.7px 327.4px,552.5px 328.0px,553.3px 328.6px,554.0px 329.2px,554.8px 329.8px,555.5px 330.3px,556.2px 330.8px,556.8px 331.3px,557.5px 331.8px,558.1px 332.3px,558.7px 332.7px,559.2px 333.2px,559.8px 333.6px,560.3px 334.0px,560.8px 334.4px,561.3px 334.7px,561.8px 335.1px,562.2px 335.4px,562.6px 335.7px,563.0px 336.0px,563.4px 336.3px,563.8px 336.6px,564.1px 336.9px,564.4px 337.1px,564.8px 337.4px,565.1px 337.6px,565.3px 337.8px,565.6px 338.0px,565.9px 338.2px,566.1px 338.4px,566.4px 338.6px,566.6px 338.8px,566.8px 338.9px,567.0px 339.1px,567.2px 339.2px,567.4px 339.4px,567.5px 339.5px,567.7px 339.6px,567.8px 339.7px,567.9px 339.8px,568.1px 339.9px,568.2px 340.0px,568.3px 340.1px,568.4px 340.2px,568.5px 340.3px,568.7px 340.4px,568.8px 340.4px,568.9px 340.5px,569.0px 340.6px,569.0px 340.7px,569.1px 340.7px,569.2px 340.8px,569.3px 340.9px,569.4px 340.9px,569.5px 341.0px,569.6px 341.1px,569.7px 341.1px,569.8px 341.2px,569.9px 341.3px,569.9px 341.3px,570.0px 341.4px,570.1px 341.5px,570.2px 341.5px,570.3px 341.6px,570.3px 341.6px,570.4px 341.7px,570.4px 341.7px,570.5px 341.8px,570.5px 341.8px,570.6px 341.8px,570.6px 341.9px,570.7px 341.9px,570.7px 341.9px,570.7px 341.9px,570.7px 342.0px,570.8px 342.0px,570.8px 342.0px,570.8px 342.0px,570.8px 342.0px,570.8px 342.0px,570.8px 342.0px,570.9px 342.0px,570.9px 342.0px)"><div style="margin-top:2px">
<i style="background:linear-gradient(90deg,#090 50px,#090 75px)"></i>
<i style="background:linear-gradient(90deg,#090 46px,#090 83px)"></i>
<i style="background:linear-gradient(90deg,#090 39px,#090 91px)"></i>
<i style="background:linear-gradient(90deg,#090 36px,#090 96px)"></i>
<i style="background:linear-gradient(90deg,#090 33px,#090 104px)"></i>
<i style="background:linear-gradient(90deg,#090 31px,#090 109px)"></i>
<i style="background:linear-gradient(90deg,#090 28px,#090 112px)"></i>
<i style="background:linear-gradient(90deg,#090 26px,#090 118px)"></i>
<i style="background:linear-gradient(90deg,#009901 25px,#090 123px)"></i>
<i style="background:linear-gradient(90deg,#009901 23px,#090 128px)"></i>
<i style="background:linear-gradient(90deg,#009902 22px,#090 131px)"></i>
<i style="background:linear-gradient(90deg,#009903 20px,#090 41px,#090 135px)"></i>
<i style="background:linear-gradient(90deg,#009903 19px,#090 44px,#090 140px)"></i>
<i style="background:linear-gradient(90deg,#009904 18px,#090 47px,#090 143px)"></i>
<i style="background:linear-gradient(90deg,#009904 17px,#090 51px,#090 148px)"></i>
<i style="background:linear-gradient(90deg,#009905 16px,#090 54px,#090 151px)"></i>
<i style="background:linear-gradient(90deg,#009906 15px,#090 57px,#090 154px)"></i>
<i style="background:linear-gradient(90deg,#009906 14px,#090 60px,#090 159px)"></i>
<i style="background:linear-gradient(90deg,#009907 14px,#090 64px,#090 162px)"></i>
<i style="background:linear-gradient(90deg,#009907 13px,#090 67px,#090 165px)"></i>
<i style="background:linear-gradient(90deg,#009908 12px,#090 70px,#090 169px)"></i>
<i style="background:linear-gradient(90deg,#009909 11px,#090 73px,#090 173px)"></i>
<i style="background:linear-gradient(90deg,#009909 10px,#090 77px,#090 176px)"></i>
<i style="background:linear-gradient(90deg,#00990a 9px,#090 80px,#090 179px)"></i>
<i style="background:linear-gradient(90deg,#00990a 8px,#090 83px,#090 183px)"></i>
<i style="background:linear-gradient(90deg,#00990b 8px,#090 87px,#090 186px)"></i>
<i style="background:linear-gradient(90deg,#00990c 7px,#090 90px,#090 189px)"></i>
<i style="background:linear-gradient(90deg,#00990c 7px,#090 93px,#090 192px)"></i>
<i style="background:linear-gradient(90deg,#00990d 6px,#090 96px,#090 195px)"></i>
<i style="background:linear-gradient(90deg,#00990d 6px,#090 100px,#090 198px)"></i>
<i style="background:linear-gradient(90deg,#00990e 5px,#090 103px,#090 201px)"></i>
<i style="background:linear-gradient(90deg,#00990f 5px,#090 106px,#090 204px)"></i>
<i style="background:linear-gradient(90deg,#00990f 4px,#090 109px,#090 207px)"></i>
<i style="background:linear-gradient(90deg,#009910 4px,#090 113px,#090 211px)"></i>
<i style="background:linear-gradient(90deg,#009910 4px,#090 116px,#090 214px)"></i>
<i style="background:linear-gradient(90deg,#091 4px,#090 119px,#090 217px)"></i>
<i style="background:linear-gradient(90deg,#009912 3px,#090 123px,#090 220px)"></i>
<i style="background:linear-gradient(90deg,#009912 3px,#090 126px,#090 223px)"></i>
<i style="background:linear-gradient(90deg,#009913 3px,#090 129px,#090 226px)"></i>
<i style="background:linear-gradient(90deg,#009913 3px,#090 132px,#090 229px)"></i>
<i style="background:linear-gradient(90deg,#009914 3px,#090 136px,#090 231px)"></i>
<i style="background:linear-gradient(90deg,#009915 2px,#090 139px,#090 234px)"></i>
<i style="background:linear-gradient(90deg,#009915 2px,#090 142px,#090 237px)"></i>
<i style="background:linear-gradient(90deg,#009916 2px,#090 145px,#090 240px)"></i>
<i style="background:linear-gradient(90deg,#009916 2px,#090 149px,#090 243px)"></i>
<i style="background:linear-gradient(90deg,#009917 2px,#090 152px,#090 246px)"></i>
<i style="background:linear-gradient(90deg,#009918 1px,#090 155px,#090 248px)"></i>
<i style="background:linear-gradient(90deg,#009918 1px,#090 159px,#019900 251px)"></i>
<i style="background:linear-gradient(90deg,#009919 1px,#090 162px,#090 248px,#049900 254px)"></i>
<i style="background:linear-gradient(90deg,#00991a 1px,#090 165px,#090 248px,#079900 257px)"></i>
<i style="background:linear-gradient(90deg,#00991a 1px,#090 168px,#090 247px,#0a9900 260px)"></i>
<i style="background:linear-gradient(90deg,#00991b 1px,#090 172px,#090 246px,#0c9900 262px)"></i>
<i style="background:linear-gradient(90deg,#00991b 1px,#090 175px,#090 245px,#109900 265px)"></i>
<i style="background:linear-gradient(90deg,#00991c 1px,#090 178px,#090 245px,#139900 268px)"></i>
<i style="background:linear-gradient(90deg,#00991d 1px,#090 181px,#090 244px,#159900 270px)"></i>
<i style="background:linear-gradient(90deg,#00991d 1px,#090 185px,#090 243px,#199900 273px)"></i>
<i style="background:linear-gradient(90deg,#00991e 0px,#090 188px,#090 243px,#1b9900 275px)"></i>
<i style="background:linear-gradient(90deg,#00991f 0px,#090 191px,#090 242px,#1f9900 278px)"></i>
<i style="background:linear-gradient(90deg,#009920 0px,#090 195px,#090 241px,#290 281px)"></i>
<i style="background:linear-gradient(90deg,#009920 0px,#090 198px,#090 241px,#269900 284px)"></i>
<i style="background:linear-gradient(90deg,#009921 0px,#091 107px,#090 201px,#090 240px,#2a9900 287px)"></i>
<i style="background:linear-gradient(90deg,#092 0px,#009912 108px,#090 204px,#090 239px,#2d9900 289px)"></i>
<i style="background:linear-gradient(90deg,#092 1px,#009912 111px,#090 208px,#090 238px,#309900 292px)"></i>
<i style="background:linear-gradient(90deg,#009923 1px,#009913 113px,#090 211px,#090 238px,#349900 294px)"></i>
<i style="background:linear-gradient(90deg,#009924 1px,#009913 115px,#090 214px,#090 237px,#389900 297px)"></i>
<i style="background:linear-gradient(90deg,#009925 1px,#009914 116px,#090 217px,#090 236px,#3c9900 300px)"></i>
<i style="background:linear-gradient(90deg,#009925 1px,#009914 119px,#090 221px,#090 236px,#409900 303px)"></i>
<i style="background:linear-gradient(90deg,#009926 1px,#090 235px,#490 305px)"></i>
<i style="background:linear-gradient(90deg,#009927 1px,#009917 112px,#090 234px,#290 271px,#489900 308px)"></i>
<i style="background:linear-gradient(90deg,#009928 1px,#009916 121px,#090 233px,#239900 271px,#4d9900 311px)"></i>
<i style="background:linear-gradient(90deg,#009928 1px,#009916 126px,#090 233px,#279900 274px,#509900 313px)"></i>
<i style="background:linear-gradient(90deg,#009929 1px,#009917 125px,#009901 232px,#289900 274px,#549900 315px)"></i>
<i style="background:linear-gradient(90deg,#00992a 1px,#009918 125px,#009902 231px,#2a9900 275px,#599900 318px)"></i>
<i style="background:linear-gradient(90deg,#00992b 1px,#009918 125px,#009903 231px,#0c9900 244px,#2e9900 278px,#5e9900 321px)"></i>
<i style="background:linear-gradient(90deg,#00992b 2px,#009919 125px,#009904 230px,#109900 247px,#309900 279px,#649900 324px)"></i>
<i style="background:linear-gradient(90deg,#00992c 2px,#00991a 124px,#009905 229px,#149900 251px,#319900 279px,#689900 326px)"></i>
<i style="background:linear-gradient(90deg,#00992d 2px,#00991b 124px,#009906 228px,#189900 254px,#329900 279px,#6d9900 329px)"></i>
<i style="background:linear-gradient(90deg,#00992e 2px,#00991c 124px,#009907 228px,#1c9900 257px,#379900 282px,#729900 331px)"></i>
<i style="background:linear-gradient(90deg,#00992f 2px,#00991d 123px,#009908 227px,#209900 260px,#399900 283px,#789900 334px)"></i>
<i style="background:linear-gradient(90deg,#009930 2px,#00991e 123px,#009909 226px,#259900 264px,#3b9900 284px,#7e9900 337px)"></i>
<i style="background:linear-gradient(90deg,#009930 3px,#00991f 123px,#00990a 226px,#2a9900 267px,#3f9900 286px,#849900 340px)"></i>
<i style="background:linear-gradient(90deg,#009931 3px,#009920 123px,#00990b 225px,#2e9900 270px,#419900 287px,#659900 316px,#8b9900 343px)"></i>
<i style="background:linear-gradient(90deg,#009932 3px,#009921 122px,#00990d 224px,#390 273px,#490 288px,#689900 317px,#909900 345px)"></i>
<i style="background:linear-gradient(90deg,#093 3px,#092 122px,#00990e 223px,#379900 276px,#459900 288px,#6d9900 319px,#979900 348px)"></i>
<i style="background:linear-gradient(90deg,#009934 3px,#009923 122px,#00990f 223px,#3d9900 280px,#699900 315px,#989900 347px,#999400 351px)"></i>
<i style="background:linear-gradient(90deg,#009935 3px,#009924 121px,#009910 222px,#489900 288px,#6f9900 318px,#990 346px,#998f00 353px)"></i>
<i style="background:linear-gradient(90deg,#009936 4px,#009925 121px,#091 221px,#479900 286px,#6f9900 316px,#989900 344px,#998900 356px)"></i>
<i style="background:linear-gradient(90deg,#009937 4px,#009926 121px,#009912 221px,#499901 286px,#6f9900 315px,#990 343px,#998400 358px)"></i>
<i style="background:linear-gradient(90deg,#009938 4px,#009927 121px,#009913 220px,#4b9902 287px,#719900 315px,#989900 341px,#997e00 361px)"></i>
<i style="background:linear-gradient(90deg,#009939 4px,#009928 120px,#009915 219px,#519902 290px,#990 340px,#997a00 363px)"></i>
<i style="background:linear-gradient(90deg,#00993a 4px,#009929 120px,#009916 218px,#569902 293px,#989900 338px,#997500 366px)"></i>
<i style="background:linear-gradient(90deg,#00993b 4px,#00992a 120px,#009917 218px,#5d9902 297px,#990 337px,#998300 352px,#997000 369px)"></i>
<i style="background:linear-gradient(90deg,#00993c 5px,#00992b 120px,#009918 217px,#639902 300px,#990 335px,#998100 352px,#996c00 371px)"></i>
<i style="background:linear-gradient(90deg,#00993d 5px,#00992d 119px,#00991a 216px,#6a9902 303px,#999800 334px,#997d00 353px,#996700 374px)"></i>
<i style="background:linear-gradient(90deg,#00993e 5px,#00992e 118px,#00991b 215px,#709902 306px,#990 332px,#997d00 352px,#996400 376px)"></i>
<i style="background:linear-gradient(90deg,#00993f 5px,#00992f 119px,#00991c 215px,#789902 310px,#989900 330px,#997900 353px,#996000 379px)"></i>
<i style="background:linear-gradient(90deg,#009940 6px,#009930 118px,#00991e 214px,#7f9902 313px,#990 329px,#970 353px,#995c00 382px)"></i>
<i style="background:linear-gradient(90deg,#009941 6px,#009931 118px,#00991f 213px,#869902 316px,#989900 327px,#997500 353px,#995800 384px)"></i>
<i style="background:linear-gradient(90deg,#009942 6px,#093 117px,#009920 212px,#990 326px,#997300 353px,#950 387px)"></i>
<i style="background:linear-gradient(90deg,#009943 7px,#009934 118px,#092 212px,#999902 324px,#998400 338px,#997100 353px,#995200 389px)"></i>
<i style="background:linear-gradient(90deg,#094 7px,#009935 117px,#009923 211px,#999302 326px,#997f00 340px,#996d00 355px,#994e00 392px)"></i>
<i style="background:linear-gradient(90deg,#009945 7px,#009936 117px,#009925 210px,#998c02 329px,#996800 358px,#994b00 395px)"></i>
<i style="background:linear-gradient(90deg,#009946 7px,#009937 117px,#009926 210px,#998402 333px,#996300 362px,#994900 397px)"></i>
<i style="background:linear-gradient(90deg,#009947 8px,#009939 117px,#009928 209px,#997d02 336px,#995e00 365px,#994500 400px)"></i>
<i style="background:linear-gradient(90deg,#009948 8px,#00993a 116px,#009929 208px,#997702 339px,#995b00 367px,#994300 402px)"></i>
<i style="background:linear-gradient(90deg,#00994a 8px,#00993b 116px,#00992b 207px,#997002 343px,#995600 371px,#994000 405px)"></i>
<i style="background:linear-gradient(90deg,#00994b 9px,#00993d 116px,#00992c 207px,#996b02 346px,#995200 374px,#993d00 408px)"></i>
<i style="background:linear-gradient(90deg,#00994c 9px,#00993e 116px,#00992e 206px,#996602 349px,#994f00 377px,#993b00 410px)"></i>
<i style="background:linear-gradient(90deg,#00994d 9px,#00993f 115px,#00992f 205px,#996102 352px,#994b00 380px,#993900 413px)"></i>
<i style="background:linear-gradient(90deg,#00994e 10px,#009941 115px,#009931 204px,#995c02 356px,#994700 384px,#993600 416px)"></i>
<i style="background:linear-gradient(90deg,#009950 10px,#009942 115px,#093 204px,#995802 359px,#940 387px,#993400 419px)"></i>
<i style="background:linear-gradient(90deg,#009951 10px,#094 115px,#009934 203px,#995402 362px,#994100 389px,#993200 421px)"></i>
<i style="background:linear-gradient(90deg,#009952 11px,#009945 115px,#009936 202px,#995002 365px,#993e00 392px,#993000 423px)"></i>
<i style="background:linear-gradient(90deg,#009953 11px,#009947 115px,#009938 202px,#994b02 369px,#993c00 395px,#992e00 426px)"></i>
<i style="background:linear-gradient(90deg,#095 11px,#009948 114px,#00993a 201px,#994802 372px,#993900 398px,#992b00 429px)"></i>
<i style="background:linear-gradient(90deg,#009956 12px,#00994a 114px,#00993b 200px,#994402 375px,#992a00 431px)"></i>
<i style="background:linear-gradient(90deg,#009957 12px,#00994c 113px,#00993d 199px,#994101 379px,#992800 434px)"></i>
<i style="background:linear-gradient(90deg,#009959 12px,#00994d 114px,#00993f 199px,#993e01 382px,#992600 437px)"></i>
<i style="background:linear-gradient(90deg,#00995a 13px,#00994f 113px,#009941 198px,#993b01 385px,#992400 439px)"></i>
<i style="background:linear-gradient(90deg,#00995c 13px,#009950 113px,#009943 197px,#993801 388px,#920 442px)"></i>
<i style="background:linear-gradient(90deg,#00995d 13px,#009952 112px,#009945 196px,#993501 392px,#992100 445px)"></i>
<i style="background:linear-gradient(90deg,#00995f 14px,#009954 113px,#009947 196px,#993201 395px,#991f00 447px)"></i>
<i style="background:linear-gradient(90deg,#009960 14px,#009949 195px,#992f01 398px,#991e00 449px)"></i>
<i style="background:linear-gradient(90deg,#009961 15px,#00994b 194px,#992d01 402px,#991c00 452px)"></i>
<i style="background:linear-gradient(90deg,#009963 15px,#00994d 194px,#992a01 405px,#991a00 455px)"></i>
<i style="background:linear-gradient(90deg,#009965 16px,#00994f 193px,#992801 408px,#991900 458px)"></i>
<i style="background:linear-gradient(90deg,#096 16px,#009952 192px,#992601 411px,#991700 460px)"></i>
<i style="background:linear-gradient(90deg,#009968 16px,#009954 191px,#992401 415px,#991600 463px)"></i>
<i style="background:linear-gradient(90deg,#009969 17px,#009956 191px,#049956 194px,#992201 418px,#991500 465px)"></i>
<i style="background:linear-gradient(90deg,#00996b 17px,#009958 190px,#992001 421px,#991300 468px)"></i>
<i style="background:linear-gradient(90deg,#00996d 17px,#00995b 189px,#991e01 424px,#991200 471px)"></i>
<i style="background:linear-gradient(90deg,#00996f 18px,#00995d 188px,#991c01 428px,#910 473px)"></i>
<i style="background:linear-gradient(90deg,#009970 18px,#009960 188px,#04995f 191px,#991a01 431px,#991000 475px)"></i>
<i style="background:linear-gradient(90deg,#009972 19px,#009962 187px,#049962 190px,#991801 434px,#990e00 478px)"></i>
<i style="background:linear-gradient(90deg,#009974 19px,#009965 186px,#991601 438px,#990d00 481px)"></i>
<i style="background:linear-gradient(90deg,#009976 20px,#009967 186px,#991501 441px,#990c00 484px)"></i>
<i style="background:linear-gradient(90deg,#009978 20px,#00996a 185px,#04996a 188px,#991301 444px,#990b00 487px)"></i>
<i style="background:linear-gradient(90deg,#00997a 21px,#00996d 184px,#04996d 187px,#991201 447px,#990a00 489px)"></i>
<i style="background:linear-gradient(90deg,#00997c 21px,#009970 183px,#991001 451px,#990900 491px)"></i>
<i style="background:linear-gradient(90deg,#00997e 22px,#009972 183px,#059972 186px,#990f01 454px,#990700 494px)"></i>
<i style="background:linear-gradient(90deg,#009980 22px,#009975 182px,#049975 185px,#990d01 457px,#990700 496px)"></i>
<i style="background:linear-gradient(90deg,#009982 23px,#009978 181px,#049978 184px,#990c01 461px,#990500 499px)"></i>
<i style="background:linear-gradient(90deg,#009984 23px,#00997c 180px,#990b01 464px,#990400 502px)"></i>
<i style="background:linear-gradient(90deg,#009986 24px,#00997f 180px,#05997e 183px,#990901 467px,#990300 505px)"></i>
<i style="background:linear-gradient(90deg,#009989 24px,#009982 179px,#049982 182px,#990801 470px,#990200 507px)"></i>
<i style="background:linear-gradient(90deg,#00998b 25px,#009985 178px,#049985 181px,#990701 474px,#990100 510px)"></i>
<i style="background:linear-gradient(90deg,#00998d 25px,#009989 177px,#049988 180px,#990601 477px,#990100 512px)"></i>
<i style="background:linear-gradient(90deg,#009990 26px,#00998c 177px,#05998c 180px,#990401 480px,#900 516px)"></i>
<i style="background:linear-gradient(90deg,#009992 26px,#00998f 176px,#04998f 179px,#990301 484px,#900 518px)"></i>
<i style="background:linear-gradient(90deg,#009994 27px,#009993 175px,#049993 178px,#990201 487px,#900 520px)"></i>
<i style="background:linear-gradient(90deg,#009997 27px,#009997 175px,#059997 178px,#990101 488px,#900 523px)"></i>
<i style="background:linear-gradient(90deg,#009899 28px,#009799 174px,#059799 177px,#990102 483px,#900 526px)"></i>
<i style="background:linear-gradient(90deg,#009699 28px,#009499 173px,#049499 176px,#990103 478px,#900 528px)"></i>
<i style="background:linear-gradient(90deg,#009399 29px,#009099 172px,#049099 175px,#990104 474px,#900 531px)"></i>
<i style="background:linear-gradient(90deg,#009199 29px,#008d99 172px,#058c99 175px,#990106 469px,#900 509px,#900 533px)"></i>
<i style="background:linear-gradient(90deg,#008e99 30px,#008999 171px,#048999 174px,#990207 464px,#900 513px,#900 536px)"></i>
<i style="background:linear-gradient(90deg,#008c99 30px,#008699 170px,#048699 173px,#990108 460px,#900 516px,#900 538px)"></i>
<i style="background:linear-gradient(90deg,#008999 31px,#008399 169px,#058299 173px,#990109 455px,#900 519px,#900 541px)"></i>
<i style="background:linear-gradient(90deg,#008799 31px,#007f99 169px,#057f99 172px,#99020b 450px,#900 522px,#900 544px)"></i>
<i style="background:linear-gradient(90deg,#008499 32px,#007c99 168px,#047c99 171px,#99020c 445px,#990001 521px,#900 547px)"></i>
<i style="background:linear-gradient(90deg,#008299 32px,#007999 167px,#047999 170px,#99020d 441px,#990002 515px,#900 549px)"></i>
<i style="background:linear-gradient(90deg,#008099 33px,#007699 167px,#057699 170px,#99020f 436px,#990003 511px,#900 552px)"></i>
<i style="background:linear-gradient(90deg,#007d99 34px,#007399 166px,#047399 169px,#990210 431px,#990004 505px,#900 554px)"></i>
<i style="background:linear-gradient(90deg,#007b99 34px,#007099 165px,#047099 168px,#990212 426px,#990005 501px,#900 557px)"></i>
<i style="background:linear-gradient(90deg,#007999 35px,#006d99 165px,#990213 422px,#990005 498px,#900 560px)"></i>
<i style="background:linear-gradient(90deg,#079 35px,#006b99 164px,#046a99 167px,#990215 417px,#990006 495px,#900 563px)"></i>
<i style="background:linear-gradient(90deg,#007499 36px,#006899 163px,#046799 166px,#990217 412px,#990007 491px,#900 565px)"></i>
<i style="background:linear-gradient(90deg,#007299 37px,#006599 162px,#990218 407px,#990008 487px,#900 568px)"></i>
<i style="background:linear-gradient(90deg,#007099 37px,#006399 162px,#046299 165px,#99021a 403px,#990009 485px,#900 571px)"></i>
<i style="background:linear-gradient(90deg,#006e99 38px,#006099 161px,#046099 164px,#99021c 398px,#99000a 481px,#900 573px)"></i>
<i style="background:linear-gradient(90deg,#006c99 38px,#005e99 160px,#99021e 393px,#99000b 476px,#900 573px)"></i>
<i style="background:linear-gradient(90deg,#006a99 39px,#005b99 160px,#990220 389px,#99000d 466px,#900 567px)"></i>
<i style="background:linear-gradient(90deg,#006799 40px,#005999 159px,#045899 162px,#990222 384px,#99000f 460px,#990001 562px)"></i>
<i style="background:linear-gradient(90deg,#006599 40px,#005699 158px,#990224 379px,#990010 455px,#990002 556px)"></i>
<i style="background:linear-gradient(90deg,#006399 41px,#005499 157px,#990226 374px,#990012 449px,#990003 551px)"></i>
<i style="background:linear-gradient(90deg,#006199 41px,#005299 157px,#990228 370px,#990013 444px,#990004 545px)"></i>
<i style="background:linear-gradient(90deg,#005f99 42px,#005099 156px,#99022b 365px,#990015 439px,#990005 539px)"></i>
<i style="background:linear-gradient(90deg,#005d99 43px,#004d99 155px,#99022d 360px,#990016 434px,#990006 534px)"></i>
<i style="background:linear-gradient(90deg,#005b99 43px,#004b99 155px,#990230 355px,#990018 428px,#990007 528px)"></i>
<i style="background:linear-gradient(90deg,#005999 44px,#004999 154px,#990232 351px,#99001a 423px,#990008 522px)"></i>
<i style="background:linear-gradient(90deg,#005799 45px,#004799 153px,#990235 346px,#990027 379px,#99001b 418px,#990009 517px)"></i>
<i style="background:linear-gradient(90deg,#005699 45px,#004599 152px,#990238 341px,#99002a 374px,#99001d 412px,#99000a 511px)"></i>
<i style="background:linear-gradient(90deg,#005499 46px,#004399 152px,#99023b 336px,#99002c 369px,#99001f 407px,#99000b 506px)"></i>
<i style="background:linear-gradient(90deg,#005299 47px,#004199 151px,#99023e 332px,#99002e 364px,#990021 402px,#99000c 500px)"></i>
<i style="background:linear-gradient(90deg,#005099 47px,#003f99 150px,#990241 327px,#990031 359px,#990023 397px,#99000e 494px)"></i>
<i style="background:linear-gradient(90deg,#004e99 48px,#003d99 150px,#990345 322px,#990034 354px,#990025 391px,#99000f 489px)"></i>
<i style="background:linear-gradient(90deg,#004c99 49px,#003b99 149px,#990248 318px,#990036 350px,#990027 387px,#990010 483px)"></i>
<i style="background:linear-gradient(90deg,#004a99 50px,#003a99 148px,#99034c 313px,#990039 344px,#99002a 381px,#99001d 425px,#901 478px)"></i>
<i style="background:linear-gradient(90deg,#004999 50px,#003899 147px,#990350 308px,#99003c 339px,#99002c 376px,#99001e 420px,#990013 472px)"></i>
<i style="background:linear-gradient(90deg,#004799 51px,#003699 147px,#990354 303px,#990040 334px,#99002f 370px,#990020 414px,#990014 466px)"></i>
<i style="background:linear-gradient(90deg,#004599 52px,#003499 146px,#990358 299px,#990043 329px,#990031 366px,#902 409px,#990016 461px)"></i>
<i style="background:linear-gradient(90deg,#004399 53px,#039 145px,#99035d 294px,#990046 324px,#990034 360px,#990024 403px,#990017 455px)"></i>
<i style="background:linear-gradient(90deg,#004299 53px,#003199 145px,#990362 289px,#99004a 319px,#990036 355px,#990026 398px,#990019 450px)"></i>
<i style="background:linear-gradient(90deg,#004099 54px,#002f99 144px,#990367 284px,#99005d 295px,#99004f 313px,#99003a 349px,#990029 392px,#99001a 444px)"></i>
<i style="background:linear-gradient(90deg,#003e99 55px,#002e99 143px,#99036c 280px,#990052 309px,#99003d 344px,#99002b 387px,#99001c 438px)"></i>
<i style="background:linear-gradient(90deg,#003c99 56px,#012c99 143px,#990372 275px,#906 286px,#990056 304px,#990040 339px,#99002d 381px,#99001e 433px)"></i>
<i style="background:linear-gradient(90deg,#003b99 57px,#002a99 142px,#990479 270px,#99006c 281px,#99005c 298px,#990043 333px,#990030 375px,#990020 427px)"></i>
<i style="background:linear-gradient(90deg,#003999 57px,#002999 141px,#99047f 265px,#990072 276px,#990060 293px,#990047 327px,#903 369px,#902 421px)"></i>
<i style="background:linear-gradient(90deg,#003799 58px,#002799 140px,#990485 261px,#907 272px,#990065 289px,#99004a 323px,#990035 365px,#990023 416px)"></i>
<i style="background:linear-gradient(90deg,#003699 59px,#012699 140px,#99048d 256px,#99007d 267px,#99006b 283px,#99004f 317px,#990038 359px,#990025 410px)"></i>
<i style="background:linear-gradient(90deg,#003499 60px,#002499 139px,#990496 251px,#990085 262px,#990071 278px,#990052 312px,#99003a 354px,#990027 405px)"></i>
<i style="background:linear-gradient(90deg,#003299 61px,#002399 138px,#990399 249px,#99008c 257px,#990073 276px,#990056 308px,#99003d 349px,#99002a 399px)"></i>
<i style="background:linear-gradient(90deg,#003199 62px,#012199 138px,#990198 250px,#990074 276px,#990057 307px,#99003f 346px,#99002c 393px)"></i>
<i style="background:linear-gradient(90deg,#002f99 63px,#002099 137px,#840499 237px,#990098 250px,#990075 275px,#990059 305px,#990042 342px,#99002e 388px)"></i>
<i style="background:linear-gradient(90deg,#002d99 64px,#001f99 136px,#7c0499 232px,#990098 250px,#907 274px,#99005b 303px,#904 339px,#990031 382px)"></i>
<i style="background:linear-gradient(90deg,#002c99 65px,#001d99 135px,#760499 228px,#990098 250px,#907 274px,#99005c 302px,#990046 336px,#903 377px)"></i>
<i style="background:linear-gradient(90deg,#002a99 66px,#011c99 135px,#6f0499 223px,#7f0099 234px,#909 250px,#990078 273px,#99005e 300px,#990048 332px,#990036 371px)"></i>
<i style="background:linear-gradient(90deg,#002999 66px,#001b99 134px,#670499 218px,#780099 229px,#909 250px,#99007a 272px,#990060 298px,#99004a 329px,#990038 365px)"></i>
<i style="background:linear-gradient(90deg,#002799 67px,#001999 133px,#600499 213px,#700099 224px,#909 250px,#99007c 271px,#990062 296px,#99004d 325px,#99003b 360px)"></i>
<i style="background:linear-gradient(90deg,#002699 68px,#011899 133px,#5b0399 209px,#6b0099 220px,#909 250px,#99007c 271px,#990064 294px,#990050 322px,#99003e 354px)"></i>
<i style="background:linear-gradient(90deg,#002499 69px,#001799 132px,#550399 204px,#640099 215px,#909 250px,#99007d 270px,#990067 292px,#990053 318px,#990041 348px)"></i>
<i style="background:linear-gradient(90deg,#029 70px,#001699 131px,#4e0399 199px,#5d0099 210px,#980099 250px,#99007f 269px,#990069 290px,#905 315px,#904 343px)"></i>
<i style="background:linear-gradient(90deg,#002199 71px,#001499 130px,#480399 194px,#580099 206px,#980099 250px,#99007f 269px,#99006b 288px,#990058 311px,#990048 337px)"></i>
<i style="background:linear-gradient(90deg,#001f99 72px,#011399 130px,#480299 194px,#6f0099 223px,#980099 250px,#99007f 269px,#99006c 287px,#99005b 308px,#99004b 332px)"></i>
<i style="background:linear-gradient(90deg,#001e99 73px,#001299 129px,#480199 193px,#6e0099 222px,#980099 250px,#990081 268px,#99006f 285px,#99004f 326px)"></i>
<i style="background:linear-gradient(90deg,#001c99 74px,#019 128px,#480099 193px,#6e0099 222px,#909 251px,#990084 266px,#990072 282px,#990053 320px)"></i>
<i style="background:linear-gradient(90deg,#001b99 75px,#010f99 128px,#480099 193px,#700099 223px,#909 251px,#990074 280px,#990057 315px)"></i>
<i style="background:linear-gradient(90deg,#001999 76px,#000e99 127px,#3a0099 181px,#490099 193px,#700099 223px,#909 251px,#990078 277px,#99005b 309px)"></i>
<i style="background:linear-gradient(90deg,#001899 77px,#000d99 126px,#360099 177px,#480099 192px,#6e0099 222px,#909 251px,#990079 276px,#990060 304px)"></i>
<i style="background:linear-gradient(90deg,#001799 78px,#000c99 125px,#310099 172px,#480099 192px,#6f0099 222px,#980099 251px,#99007d 273px,#990065 298px)"></i>
<i style="background:linear-gradient(90deg,#001599 79px,#010b99 125px,#2c0099 167px,#480099 192px,#6f0099 222px,#980099 251px,#99007f 271px,#99006a 292px)"></i>
<i style="background:linear-gradient(90deg,#001499 80px,#000a99 124px,#280099 163px,#470099 191px,#6f0099 222px,#980099 251px,#990082 269px,#99006f 287px)"></i>
<i style="background:linear-gradient(90deg,#001299 82px,#000999 123px,#230099 158px,#480099 191px,#6f0099 222px,#980099 251px,#990075 281px)"></i>
<i style="background:linear-gradient(90deg,#019 83px,#010899 123px,#1e0099 153px,#480099 191px,#6f0099 222px,#980099 251px,#99007b 276px)"></i>
<i style="background:linear-gradient(90deg,#000f99 84px,#010799 122px,#1b0099 149px,#480099 191px,#6f0099 222px,#909 252px,#990081 270px)"></i>
<i style="background:linear-gradient(90deg,#000e99 85px,#000699 121px,#160099 144px,#480099 190px,#6f0099 222px,#909 252px,#990089 264px)"></i>
<i style="background:linear-gradient(90deg,#000c99 86px,#000599 120px,#120099 139px,#480099 190px,#6f0099 222px,#909 252px,#990090 259px)"></i>
<i style="background:linear-gradient(90deg,#000b99 88px,#000499 119px,#060299 126px,#490099 191px,#990098 253px)"></i>
<i style="background:linear-gradient(90deg,#000999 89px,#000399 118px,#060199 125px,#470099 189px,#6c0099 219px,#910099 247px)"></i>
<i style="background:linear-gradient(90deg,#000899 90px,#000299 117px,#040199 122px,#430099 185px,#8a0099 242px)"></i>
<i style="background:linear-gradient(90deg,#000799 91px,#020099 119px,#3e0099 180px,#820099 236px)"></i>
<i style="background:linear-gradient(90deg,#000599 93px,#009 116px,#030099 120px,#3c0099 178px,#7b0099 231px)"></i>
<i style="background:linear-gradient(90deg,#000499 95px,#009 115px,#030099 119px,#380099 174px,#740099 225px)"></i>
<i style="background:linear-gradient(90deg,#000299 96px,#020099 117px,#350099 170px,#6c0099 219px)"></i>
<i style="background:linear-gradient(90deg,#000199 97px,#020099 116px,#320099 167px,#609 214px)"></i>
<i style="background:linear-gradient(90deg,#009 100px,#009 113px,#060099 120px,#310099 166px,#5f0099 208px)"></i>
<i style="background:linear-gradient(90deg,#009 101px,#009 113px,#060099 120px,#2f0099 163px,#5a0099 203px)"></i>
<i style="background:linear-gradient(90deg,#009 103px,#009 112px,#0a0099 124px,#2e0099 162px,#530099 197px)"></i>
<i style="background:linear-gradient(90deg,#009 105px,#010099 112px,#0f0099 128px,#4d0099 191px)"></i>
<i style="background:linear-gradient(90deg,#009 107px,#009 111px,#140099 134px,#470099 186px)"></i>
<i style="background:linear-gradient(90deg,#009 109px,#1c0099 142px,#410099 180px)"></i>
<i style="background:linear-gradient(90deg,#020099 111px,#3c0099 174px)"></i>
<i style="background:linear-gradient(90deg,#050099 114px,#370099 169px)"></i>
<i style="background:linear-gradient(90deg,#080099 117px,#310099 163px)"></i>
<i style="background:linear-gradient(90deg,#0b0099 120px,#2d0099 158px)"></i>
<i style="background:linear-gradient(90deg,#0e0099 123px,#280099 152px)"></i>
<i style="background:linear-gradient(90deg,#109 126px,#230099 146px)"></i>
<i style="background:linear-gradient(90deg,#140099 129px,#1f0099 141px)"></i>
</div></div>
<div class="g" style="clip-path:polygon(497.3px 303.5px,233.1px 142.4px,116.5px 464.5px)"><div style="margin-top:142px">
<i style="background:linear-gradient(90deg,#00ff01 231px,#08ff00 238px)"></i>
<i style="background:linear-gradient(90deg,#00ff03 230px,#0dff00 241px)"></i>
<i style="background:linear-gradient(90deg,#00ff05 229px,#01ff03 232px,#13ff00 244px)"></i>
<i style="background:linear-gradient(90deg,#00ff06 228px,#00ff05 231px,#19ff00 247px)"></i>
<i style="background:linear-gradient(90deg,#00ff08 228px,#00ff07 230px,#21ff00 251px)"></i>
<i style="background:linear-gradient(90deg,#00ff09 227px,#01ff08 230px,#27ff00 254px)"></i>
<i style="background:linear-gradient(90deg,#00ff0b 226px,#01ff0a 229px,#2dff00 257px)"></i>
<i style="background:linear-gradient(90deg,#00ff0d 226px,#00ff0c 228px,#36ff00 261px)"></i>
<i style="background:linear-gradient(90deg,#00ff0f 225px,#03ff0d 229px,#3dff00 264px)"></i>
<i style="background:linear-gradient(90deg,#00ff10 224px,#06ff0e 230px,#4f0 267px)"></i>
<i style="background:linear-gradient(90deg,#00ff12 223px,#01ff11 226px,#08ff0f 231px,#4bff00 270px)"></i>
<i style="background:linear-gradient(90deg,#00ff14 223px,#00ff13 225px,#17ff0d 239px,#54ff00 274px)"></i>
<i style="background:linear-gradient(90deg,#00ff16 222px,#01ff15 225px,#18ff0f 239px,#5cff00 277px)"></i>
<i style="background:linear-gradient(90deg,#00ff18 221px,#01ff17 224px,#1bff10 240px,#64ff00 280px)"></i>
<i style="background:linear-gradient(90deg,#00ff1a 220px,#00ff19 223px,#20ff11 242px,#6eff00 284px)"></i>
<i style="background:linear-gradient(90deg,#00ff1b 220px,#00ff1b 222px,#2aff10 247px,#76ff00 287px)"></i>
<i style="background:linear-gradient(90deg,#00ff1d 219px,#01ff1c 222px,#2eff12 248px,#7fff00 290px)"></i>
<i style="background:linear-gradient(90deg,#00ff1f 218px,#01ff1e 221px,#31ff13 249px,#8f0 293px)"></i>
<i style="background:linear-gradient(90deg,#00ff21 218px,#02ff20 221px,#3aff13 253px,#93ff00 297px)"></i>
<i style="background:linear-gradient(90deg,#00ff23 217px,#01ff22 220px,#3eff14 254px,#9dff00 300px)"></i>
<i style="background:linear-gradient(90deg,#00ff25 216px,#01ff24 219px,#41ff15 255px,#a7ff00 303px)"></i>
<i style="background:linear-gradient(90deg,#00ff28 215px,#04ff26 220px,#47ff16 257px,#7dff0a 283px,#b3ff00 307px)"></i>
<i style="background:linear-gradient(90deg,#00ff29 215px,#00ff29 217px,#11ff25 227px,#4fff17 260px,#86ff0b 286px,#beff00 310px)"></i>
<i style="background:linear-gradient(90deg,#00ff2c 214px,#01ff2a 217px,#11ff27 226px,#53ff18 261px,#8dff0b 288px,#c9ff00 313px)"></i>
<i style="background:linear-gradient(90deg,#00ff2e 213px,#01ff2d 216px,#11ff29 225px,#57ff1a 262px,#94ff0c 290px,#d4ff00 316px)"></i>
<i style="background:linear-gradient(90deg,#00ff30 212px,#00ff2f 215px,#12ff2b 225px,#5eff1b 264px,#9fff0d 293px,#e2ff00 320px)"></i>
<i style="background:linear-gradient(90deg,#00ff32 212px,#00ff31 214px,#1fff2b 231px,#67ff1b 267px,#a9ff0d 296px,#efff00 323px)"></i>
<i style="background:linear-gradient(90deg,#00ff34 211px,#01ff33 214px,#20ff2d 231px,#6bff1d 268px,#b1ff0e 298px,#fbff00 326px)"></i>
<i style="background:linear-gradient(90deg,#00ff37 210px,#01ff36 213px,#13ff32 223px,#5cff22 260px,#aaff12 294px,#fdff01 325px,#fff600 329px)"></i>
<i style="background:linear-gradient(90deg,#00ff39 210px,#00ff38 212px,#25ff30 232px,#6eff21 267px,#b3ff13 296px,#feff03 324px,#ffe700 333px)"></i>
<i style="background:linear-gradient(90deg,#00ff3b 209px,#01ff3a 212px,#21ff34 229px,#6cff24 265px,#b1ff16 294px,#fdff06 322px,#ffdc00 336px)"></i>
<i style="background:linear-gradient(90deg,#00ff3e 208px,#01ff3d 211px,#1fff37 227px,#6cff27 264px,#b2ff19 293px,#ffff09 321px,#ffd200 339px)"></i>
<i style="background:linear-gradient(90deg,#00ff40 207px,#01ff3f 210px,#1bff3a 224px,#6aff2a 262px,#b1ff1c 291px,#feff0c 319px,#ffc600 343px)"></i>
<i style="background:linear-gradient(90deg,#00ff43 207px,#00ff42 209px,#22ff3b 227px,#6dff2c 262px,#b1ff1f 290px,#ffff0f 318px,#ffdc06 331px,#ffbc00 346px)"></i>
<i style="background:linear-gradient(90deg,#00ff45 206px,#01ff44 209px,#20ff3e 225px,#6dff2f 261px,#b2ff22 289px,#feff13 316px,#ffd608 332px,#ffb400 349px)"></i>
<i style="background:linear-gradient(90deg,#00ff48 205px,#01ff47 208px,#1aff42 221px,#69ff33 258px,#aeff25 286px,#fffe16 315px,#ffd209 332px,#ffab00 352px)"></i>
<i style="background:linear-gradient(90deg,#00ff4b 204px,#00ff49 207px,#18ff45 219px,#69ff36 257px,#b2ff28 286px,#ffff19 313px,#ffcc0a 333px,#ffa200 356px)"></i>
<i style="background:linear-gradient(90deg,#00ff4d 204px,#02ff4c 207px,#21ff46 223px,#6cff38 257px,#b0ff2b 284px,#fffe1c 312px,#ffc80c 333px,#ff9b00 359px)"></i>
<i style="background:linear-gradient(90deg,#00ff50 203px,#01ff4f 206px,#1fff49 221px,#6cff3b 256px,#b4ff2e 284px,#ffff20 310px,#ffe016 321px,#ffc50e 333px,#ffaa06 347px,#ff9300 362px)"></i>
<i style="background:linear-gradient(90deg,#00ff52 202px,#01ff51 205px,#1bff4d 218px,#6aff3e 254px,#b2ff31 282px,#feff24 308px,#ffd917 322px,#ffbd0e 335px,#ffa206 350px,#ff8b00 366px)"></i>
<i style="background:linear-gradient(90deg,#0f5 202px,#00ff54 204px,#23ff4e 221px,#6dff41 254px,#b3ff34 281px,#fffe27 307px,#ffda1b 320px,#ffbb10 334px,#ff9f07 350px,#ff8500 369px)"></i>
<i style="background:linear-gradient(90deg,#00ff58 201px,#02ff57 204px,#20ff52 219px,#6dff44 253px,#b4ff38 280px,#feff2b 305px,#ffd61c 320px,#ffb611 335px,#ff9908 352px,#ff7f00 372px)"></i>
<i style="background:linear-gradient(90deg,#00ff5b 200px,#01ff5a 203px,#19ff56 215px,#69ff48 250px,#afff3c 277px,#fffe2e 304px,#ffd720 318px,#ffb213 335px,#ff9308 354px,#ff7900 375px)"></i>
<i style="background:linear-gradient(90deg,#00ff5e 199px,#00ff5d 202px,#17ff59 213px,#69ff4b 249px,#b0ff3f 276px,#ffff32 302px,#ffd322 318px,#ffaf15 335px,#ff8f09 355px,#ff7200 379px)"></i>
<i style="background:linear-gradient(90deg,#00ff61 199px,#00ff60 201px,#1fff5b 216px,#6cff4e 249px,#aeff43 274px,#fffd35 301px,#ffd124 317px,#ffaa15 336px,#ff8a09 357px,#ff6d00 382px)"></i>
<i style="background:linear-gradient(90deg,#00ff64 198px,#01ff63 201px,#1dff5e 214px,#6cff51 248px,#b2ff46 274px,#ffff39 299px,#ffcf27 316px,#ffa818 335px,#ff860a 358px,#ff6800 385px)"></i>
<i style="background:linear-gradient(90deg,#00ff67 197px,#01ff66 200px,#18ff62 211px,#6aff55 246px,#b0ff4a 272px,#feff3d 297px,#ffcb28 316px,#ffa319 336px,#ff810b 360px,#ff6300 388px)"></i>
<i style="background:linear-gradient(90deg,#00ff6a 196px,#00ff69 199px,#13ff66 208px,#68ff59 244px,#afff4e 270px,#fffe41 296px,#ffcc2c 314px,#ffa01a 336px,#ff7c0b 362px,#ff5e00 392px)"></i>
<i style="background:linear-gradient(90deg,#00ff6d 196px,#02ff6c 199px,#1eff68 212px,#6bff5c 244px,#b3ff51 270px,#feff45 294px,#ffc82e 314px,#ff9d1c 336px,#ff780c 363px,#ff5900 395px)"></i>
<i style="background:linear-gradient(90deg,#00ff70 195px,#01ff6f 198px,#19ff6c 209px,#68ff60 242px,#aeff55 267px,#fffe49 293px,#ffdf3b 303px,#ffc630 313px,#ff9a1d 336px,#ff740d 364px,#f50 398px)"></i>
<i style="background:linear-gradient(90deg,#00ff74 194px,#01ff73 197px,#16ff6f 207px,#69ff63 241px,#b2ff59 267px,#ffff4e 291px,#ffe040 301px,#ffc734 311px,#ff971e 336px,#ff700d 366px,#ff5000 402px)"></i>
<i style="background:linear-gradient(90deg,#0f7 194px,#00ff76 196px,#1dff72 209px,#69ff67 240px,#adff5d 264px,#fffd51 290px,#ffde43 300px,#ffc236 311px,#ff9320 336px,#ff6c0e 367px,#ff4c00 405px)"></i>
<i style="background:linear-gradient(90deg,#00ff7a 193px,#02ff79 196px,#1cff76 208px,#6cff6a 240px,#b1ff61 264px,#ffff56 288px,#ffdf47 298px,#ffc138 310px,#ff9021 336px,#ff690f 368px,#ff4800 408px)"></i>
<i style="background:linear-gradient(90deg,#00ff7e 192px,#01ff7d 195px,#15ff7a 204px,#67ff6f 237px,#a9ff66 260px,#fffd59 287px,#ffdd4a 297px,#ffbf3b 309px,#ffa42e 322px,#ff8d23 336px,#ff650f 370px,#f40 411px)"></i>
<i style="background:linear-gradient(90deg,#00ff81 191px,#00ff80 194px,#12ff7e 202px,#67ff73 236px,#adff6a 260px,#fffe5f 285px,#ffdb4d 296px,#ffbd3e 308px,#ffa330 321px,#ff8a24 336px,#ff6110 371px,#ff4000 415px)"></i>
<i style="background:linear-gradient(90deg,#00ff85 191px,#00ff84 193px,#1bff81 205px,#6aff77 236px,#b1ff6d 260px,#feff64 283px,#ffda50 295px,#ffbb40 307px,#ff9f32 321px,#ff8726 336px,#ff5e10 372px,#ff3d00 418px)"></i>
<i style="background:linear-gradient(90deg,#0f8 190px,#01ff88 193px,#19ff85 203px,#68ff7b 234px,#acff73 257px,#fffe67 282px,#ffda55 293px,#ffba43 306px,#ff9e34 320px,#ff8427 336px,#ff5a10 374px,#ff3a00 421px)"></i>
<i style="background:linear-gradient(90deg,#00ff8c 189px,#01ff8b 192px,#16ff89 201px,#68ff7f 233px,#b0ff76 257px,#ffff6d 280px,#ffdb59 291px,#ffba47 304px,#ff9c37 319px,#ff8329 335px,#ff6b1c 354px,#ff5711 375px,#ff3600 425px)"></i>
<i style="background:linear-gradient(90deg,#00ff90 188px,#00ff8f 191px,#0eff8e 197px,#63ff84 230px,#a8ff7c 253px,#fffd71 279px,#ffd65b 291px,#ffb649 304px,#ff9938 319px,#ff802a 335px,#ff691d 354px,#ff5412 376px,#f30 428px)"></i>
<i style="background:linear-gradient(90deg,#00ff94 188px,#02ff93 191px,#1aff90 201px,#69ff88 231px,#afff80 254px,#ff7 277px,#ffd760 289px,#ffb64d 302px,#ff993c 317px,#ff7d2c 335px,#ff651e 355px,#ff5113 377px,#ff3000 431px)"></i>
<i style="background:linear-gradient(90deg,#00ff98 187px,#01ff97 190px,#12ff95 197px,#64ff8d 228px,#a7ff85 250px,#fffc7a 276px,#ffd563 288px,#ffb24e 302px,#ff953d 317px,#ff7a2d 335px,#ff631f 355px,#ff4f13 378px,#ff2d00 434px)"></i>
<i style="background:linear-gradient(90deg,#00ff9c 186px,#01ff9b 189px,#1f9 196px,#67ff91 228px,#aeff89 251px,#fffe80 274px,#ffd668 286px,#ffb352 300px,#ff933f 316px,#ff772e 335px,#ff6020 356px,#ff4b13 380px,#ff2a00 438px)"></i>
<i style="background:linear-gradient(90deg,#00ffa0 186px,#00ff9f 188px,#1bff9d 199px,#6aff95 228px,#b3ff8e 251px,#feff86 272px,#ffd46b 285px,#ffb155 299px,#ff9242 315px,#ff7630 334px,#ff5e22 355px,#ff4914 380px,#ff2700 441px)"></i>
<i style="background:linear-gradient(90deg,#00ffa4 185px,#02ffa3 188px,#15ffa2 196px,#68ff9a 226px,#adff93 248px,#fffd8b 271px,#ffd26f 284px,#ffaf58 298px,#ff8e43 315px,#ff7332 334px,#ff5b22 356px,#ff4615 381px,#ff2400 444px)"></i>
<i style="background:linear-gradient(90deg,#00ffa8 184px,#01ffa8 187px,#12ffa6 194px,#68ff9f 225px,#b2ff98 248px,#ffff91 269px,#ffd374 282px,#ffaf5c 296px,#ff8e47 313px,#ff7134 333px,#ff5923 356px,#ff4416 382px,#ff3109 413px,#ff2100 448px)"></i>
<i style="background:linear-gradient(90deg,#00ffad 183px,#00ffac 186px,#0affab 190px,#62ffa4 222px,#a9ff9e 244px,#fffd95 268px,#ffd177 281px,#ffab5e 296px,#ff8b48 313px,#ff6f35 333px,#ff5625 356px,#ff4116 383px,#ff2f0a 414px,#ff1f00 451px)"></i>
<i style="background:linear-gradient(90deg,#00ffb1 183px,#00ffb1 185px,#19ffaf 195px,#69ffa8 223px,#b1ffa3 245px,#fffe9c 266px,#ffd27d 279px,#ffab62 294px,#ff894b 312px,#ff6c36 333px,#ff5325 357px,#ff3e16 385px,#ff1c00 454px)"></i>
<i style="background:linear-gradient(90deg,#00ffb6 182px,#02ffb5 185px,#11ffb4 191px,#63ffae 220px,#a4ffa9 240px,#feffa2 264px,#fffca0 265px,#ffd080 278px,#ffa764 294px,#ff864c 312px,#ff6938 333px,#ff5126 357px,#ff3b17 386px,#ff290a 419px,#ff1a00 457px)"></i>
<i style="background:linear-gradient(90deg,#0fb 181px,#01ffba 184px,#0effb9 189px,#63ffb3 219px,#acffae 241px,#fffea7 263px,#ffd086 276px,#ffa768 292px,#ff8650 310px,#ff683a 332px,#ff4f27 357px,#ff3a18 386px,#ff270a 421px,#ff1700 461px)"></i>
<i style="background:linear-gradient(90deg,#00ffbf 180px,#00ffbf 183px,#0bffbe 187px,#63ffb8 218px,#adffb3 240px,#feffae 261px,#ffce8a 275px,#ffa56b 291px,#ff8452 309px,#ff663c 331px,#ff4d29 357px,#ff3719 387px,#ff250b 422px,#ff1500 464px)"></i>
<i style="background:linear-gradient(90deg,#00ffc4 180px,#02ffc4 183px,#15ffc2 190px,#67ffbe 218px,#abffb9 238px,#fffdb3 260px,#ffcc8d 274px,#ffa46e 290px,#ff8153 309px,#ff633d 331px,#ff4a2a 357px,#ff3519 388px,#ff230b 424px,#ff1300 467px)"></i>
<i style="background:linear-gradient(90deg,#00ffc9 179px,#01ffc9 182px,#11ffc8 188px,#67ffc3 217px,#b0ffbf 238px,#ffb 258px,#ffcd93 272px,#ffa473 288px,#ff8057 307px,#ff623f 330px,#ff482b 357px,#ff331a 388px,#ff200b 426px,#f10 470px)"></i>
<i style="background:linear-gradient(90deg,#00ffce 178px,#01ffce 181px,#09ffcd 184px,#61ffc9 214px,#a6ffc6 234px,#fffdbf 257px,#ffcb97 271px,#ffa276 287px,#ff7d58 307px,#ff5f40 330px,#ff462c 357px,#ff301a 390px,#ff1e0c 428px,#ff0f00 474px)"></i>
<i style="background:linear-gradient(90deg,#00ffd3 178px,#00ffd3 180px,#16ffd2 188px,#68ffce 215px,#afffcb 235px,#fffec7 255px,#ffcb9d 269px,#ffa079 286px,#ff7b5b 306px,#ff5e42 329px,#ff442d 357px,#ff2e1b 390px,#ff1c0c 430px,#ff0d00 477px)"></i>
<i style="background:linear-gradient(90deg,#00ffd9 177px,#02ffd8 180px,#0dffd8 184px,#62ffd5 212px,#a5ffd2 231px,#feffcf 253px,#fffccc 254px,#ffc9a1 268px,#ff9e7c 285px,#ff7a5d 305px,#ff5b43 329px,#ff422e 357px,#ff2c1c 391px,#ff1a0c 432px,#ff0b00 480px)"></i>
<i style="background:linear-gradient(90deg,#00ffde 176px,#01ffde 179px,#09ffde 182px,#62ffdb 211px,#aaffd8 231px,#fffed4 252px,#ffcaa7 266px,#ff9e81 283px,#ff7961 303px,#ff5a46 328px,#ff402f 357px,#ff2a1c 392px,#ff160b 438px,#ff0900 484px)"></i>
<i style="background:linear-gradient(90deg,#00ffe4 175px,#00ffe3 178px,#06ffe3 180px,#63ffe1 210px,#afffdf 231px,#ffd 250px,#ffc8ab 265px,#ff9c84 282px,#ff7864 302px,#ff5848 327px,#ff3e30 357px,#ff281d 393px,#ff150c 439px,#ff0700 487px)"></i>
<i style="background:linear-gradient(90deg,#00ffe9 175px,#00ffe9 177px,#14ffe9 184px,#66ffe7 210px,#a9ffe6 228px,#fffde2 249px,#ffe0c8 256px,#ffc5af 264px,#ff9a87 281px,#ff7465 302px,#ff5549 327px,#ff3c31 357px,#ff261d 394px,#ff130c 441px,#ff0500 490px)"></i>
<i style="background:linear-gradient(90deg,#00ffef 174px,#02ffef 177px,#10ffef 182px,#67ffee 209px,#aeffed 228px,#ffffeb 247px,#ffe2d0 254px,#ffc6b6 262px,#ff9a8d 279px,#ff7469 300px,#ff544b 326px,#ff3a32 357px,#ff241e 394px,#ff110c 442px,#ff0300 493px)"></i>
<i style="background:linear-gradient(90deg,#00fff5 173px,#01fff5 176px,#07fff5 178px,#60fff4 206px,#a3fff4 224px,#fdfff3 245px,#fffcf0 246px,#ffdfd4 253px,#ffc4ba 261px,#ff9890 278px,#ff716a 300px,#ff514c 326px,#ff3833 357px,#ff221f 395px,#ff0f0c 445px,#ff0100 497px)"></i>
<i style="background:linear-gradient(90deg,#00fffb 173px,#00fffb 175px,#15fffb 182px,#68fffb 207px,#adfffb 225px,#fffefa 244px,#ffe0dd 251px,#ffc4c1 259px,#ff9693 277px,#ff6f6d 299px,#ff504e 325px,#ff3634 357px,#ff201f 396px,#ff0d0d 446px,#f00 500px)"></i>
<i style="background:linear-gradient(90deg,#00fcff 172px,#00fcff 174px,#11fcff 180px,#67fcff 206px,#b0fcff 225px,#fffbff 243px,#ffdee1 250px,#ffc2c5 258px,#ff9396 276px,#ff6d6f 298px,#ff4e50 324px,#ff3436 356px,#ff1e20 396px,#ff0c0e 446px,#f00 498px)"></i>
<i style="background:linear-gradient(90deg,#00f6ff 171px,#01f6ff 174px,#0af6ff 177px,#64f5ff 205px,#b0f4ff 225px,#fef3ff 243px,#ffbcc6 258px,#ff8f97 276px,#ff6b72 297px,#ff4d52 323px,#ff3438 354px,#ff1f23 392px,#ff0c10 442px,#ff0002 493px)"></i>
<i style="background:linear-gradient(90deg,#00f0ff 170px,#03f0ff 174px,#5fefff 203px,#a1edff 221px,#feecff 243px,#ffe9fc 244px,#ffcedf 251px,#ffb4c4 259px,#ff8b99 276px,#ff6873 297px,#ff4a53 323px,#ff323a 353px,#ff1e25 390px,#ff0c12 438px,#ff0004 488px)"></i>
<i style="background:linear-gradient(90deg,#00eaff 170px,#00eaff 172px,#11eaff 178px,#63e8ff 204px,#a5e6ff 222px,#fde4ff 243px,#ffe2fc 244px,#ffc8e0 251px,#ffafc5 259px,#ff879a 276px,#ff6574 297px,#ff4856 322px,#ff313c 352px,#ff1d26 388px,#ff0c13 435px,#ff0006 483px)"></i>
<i style="background:linear-gradient(90deg,#00e5ff 169px,#02e5ff 172px,#0de4ff 176px,#65e2ff 204px,#aadfff 223px,#ffdbfd 244px,#ffc2e1 251px,#ffaac6 259px,#ff839b 276px,#ff6377 296px,#ff4758 321px,#ff2f3e 351px,#ff1c28 386px,#ff0b15 433px,#ff0008 479px)"></i>
<i style="background:linear-gradient(90deg,#00dfff 168px,#01dfff 171px,#09dfff 174px,#62dbff 203px,#aad9ff 223px,#ffd4fd 244px,#ffa7ca 258px,#ff819e 275px,#ff617a 295px,#ff455a 320px,#ff2f40 349px,#ff1c2a 384px,#ff0b17 429px,#ff000a 474px)"></i>
<i style="background:linear-gradient(90deg,#00daff 167px,#00d9ff 170px,#06d9ff 172px,#63d5ff 203px,#aad2ff 223px,#ffcefe 244px,#ffa2cb 258px,#ff7d9f 275px,#ff5e7b 295px,#ff445c 319px,#ff2e43 347px,#ff1c2d 381px,#ff0c1b 421px,#ff000c 469px)"></i>
<i style="background:linear-gradient(90deg,#00d4ff 167px,#00d4ff 169px,#15d3ff 177px,#68cfff 204px,#afccff 224px,#ffc8ff 244px,#ff9dcc 258px,#ff79a0 275px,#ff5b7c 295px,#ff425e 318px,#ff2d44 346px,#ff1b2f 379px,#ff0a1b 423px,#ff000d 465px)"></i>
<i style="background:linear-gradient(90deg,#00cfff 166px,#01cfff 169px,#0fceff 174px,#66c9ff 203px,#afc5ff 224px,#ffc1ff 244px,#ff98cd 258px,#ff77a3 274px,#ff597e 294px,#ff4060 317px,#ff2c47 344px,#ff1a31 377px,#ff0b1f 415px,#ff000f 460px)"></i>
<i style="background:linear-gradient(90deg,#00caff 165px,#01caff 168px,#0bc9ff 172px,#64c4ff 202px,#afbfff 224px,#febbff 244px,#ff93cd 258px,#ff73a4 274px,#ff5781 293px,#ff3f62 316px,#ff2b49 343px,#ff1a33 374px,#ff0b21 411px,#ff0012 455px)"></i>
<i style="background:linear-gradient(90deg,#00c5ff 165px,#00c5ff 167px,#15c3ff 175px,#65beff 202px,#a5baff 221px,#feb4ff 244px,#ffb2fc 245px,#ff8ccb 259px,#ff6da3 275px,#ff5380 294px,#ff3c63 316px,#ff294a 342px,#ff1936 372px,#ff0b23 408px,#ff0014 450px)"></i>
<i style="background:linear-gradient(90deg,#00c0ff 164px,#02c0ff 167px,#12beff 173px,#66b9ff 202px,#a9b4ff 222px,#ffacfd 245px,#ff8acf 258px,#ff6ba6 274px,#ff5183 293px,#ff3b65 315px,#ff284d 340px,#ff1838 370px,#ff0b25 405px,#ff0016 446px)"></i>
<i style="background:linear-gradient(90deg,#0bf 163px,#01bbff 166px,#0ebaff 171px,#64b4ff 201px,#a9aeff 222px,#ffa7fd 245px,#ff85d0 258px,#ff68a7 274px,#ff4f86 292px,#ff3a69 313px,#ff2850 338px,#ff183a 367px,#ff0b28 401px,#ff0018 441px)"></i>
<i style="background:linear-gradient(90deg,#00b7ff 162px,#00b6ff 165px,#0bb5ff 169px,#62aeff 200px,#aaa9ff 222px,#ffa1fe 245px,#ff81d1 258px,#ff65aa 273px,#ff4d88 291px,#ff386b 312px,#ff2752 336px,#ff173d 365px,#ff0a2a 398px,#ff001b 436px)"></i>
<i style="background:linear-gradient(90deg,#00b2ff 162px,#00b2ff 164px,#17b0ff 173px,#69a9ff 202px,#aea3ff 223px,#ff9cfe 245px,#ff7cd1 258px,#ff62ab 273px,#ff4a89 291px,#ff376d 311px,#ff2554 335px,#ff173f 362px,#ff0a2d 394px,#ff001d 431px)"></i>
<i style="background:linear-gradient(90deg,#00aeff 161px,#01adff 164px,#13abff 171px,#67a4ff 201px,#ae9eff 223px,#ff96ff 245px,#ff78d2 258px,#ff5eac 273px,#ff488c 290px,#ff356f 310px,#ff2457 333px,#ff1642 360px,#ff0020 427px)"></i>
<i style="background:linear-gradient(90deg,#00a9ff 160px,#01a9ff 163px,#12a7ff 170px,#689fff 201px,#b298ff 224px,#ff91ff 245px,#ff74d3 258px,#ff5caf 272px,#ff468e 289px,#ff3372 309px,#ff245a 331px,#ff1645 357px,#f02 422px)"></i>
<i style="background:linear-gradient(90deg,#00a5ff 159px,#00a4ff 162px,#0ca3ff 167px,#669aff 200px,#af93ff 223px,#ff8bff 245px,#ff6fd4 258px,#ff58b0 272px,#ff438f 289px,#ff3274 308px,#ff225c 330px,#ff1547 355px,#ff0025 417px)"></i>
<i style="background:linear-gradient(90deg,#00a1ff 159px,#02a0ff 162px,#189eff 171px,#6a95ff 201px,#b28eff 224px,#fe86ff 245px,#ff6bd4 258px,#ff55b1 272px,#ff4292 288px,#ff3177 306px,#ff2260 327px,#ff144a 352px,#ff0028 412px)"></i>
<i style="background:linear-gradient(90deg,#009dff 158px,#019cff 161px,#129aff 168px,#6591ff 199px,#a98aff 221px,#ff7ffd 246px,#ff67d5 258px,#ff51b2 272px,#ff3f93 288px,#ff2e78 306px,#ff2060 327px,#ff144c 350px,#ff002b 408px)"></i>
<i style="background:linear-gradient(90deg,#09f 157px,#0098ff 160px,#0f96ff 166px,#638dff 198px,#a985ff 221px,#ff7afd 246px,#ff63d6 258px,#ff4eb3 272px,#ff3d96 287px,#ff2d7b 305px,#ff1f63 325px,#ff134f 348px,#ff002e 403px)"></i>
<i style="background:linear-gradient(90deg,#0094ff 157px,#0094ff 159px,#1a91ff 170px,#6a88ff 200px,#ad80ff 222px,#ff76fe 246px,#ff5fd7 258px,#ff4cb6 271px,#ff3b98 286px,#ff2c7e 303px,#ff1e66 323px,#ff1252 345px,#ff0031 398px)"></i>
<i style="background:linear-gradient(90deg,#0091ff 156px,#0290ff 159px,#178dff 168px,#6884ff 199px,#ad7bff 222px,#ff71fe 246px,#ff5bd7 258px,#ff49b7 271px,#ff3899 286px,#ff2a80 302px,#ff1d69 321px,#ff1256 342px,#ff0034 394px)"></i>
<i style="background:linear-gradient(90deg,#008dff 155px,#018cff 158px,#138aff 166px,#697fff 199px,#b176ff 223px,#ff6cfe 246px,#ff59db 257px,#ff46ba 270px,#ff369c 285px,#ff2883 301px,#ff1c6c 319px,#ff1158 340px,#ff0037 389px)"></i>
<i style="background:linear-gradient(90deg,#0089ff 154px,#08f 157px,#1086ff 164px,#677bff 198px,#b172ff 223px,#ff68ff 246px,#ff55db 257px,#ff44bd 269px,#ff35a0 283px,#ff2786 299px,#ff1b70 317px,#ff115c 337px,#ff003b 384px)"></i>
<i style="background:linear-gradient(90deg,#0085ff 154px,#0284ff 157px,#1b81ff 168px,#6a77ff 199px,#b16dff 223px,#ff63ff 246px,#ff51dc 257px,#ff41bd 269px,#ff32a1 283px,#ff2689 298px,#ff105f 334px,#ff003e 379px)"></i>
<i style="background:linear-gradient(90deg,#0082ff 153px,#0181ff 156px,#187eff 166px,#6973ff 198px,#b269ff 223px,#fe5fff 246px,#ff4ddd 257px,#ff3ebe 269px,#ff30a4 282px,#ff248b 297px,#ff0f62 332px,#ff0041 375px)"></i>
<i style="background:linear-gradient(90deg,#007eff 152px,#017dff 155px,#107bff 162px,#646fff 196px,#a966ff 220px,#ff59fd 247px,#ff49dd 257px,#ff3bbf 269px,#ff2da4 282px,#ff228d 296px,#ff0f66 329px,#ff0045 370px)"></i>
<i style="background:linear-gradient(90deg,#007bff 151px,#007aff 154px,#0f78ff 161px,#656bff 196px,#a962ff 220px,#ff55fd 247px,#ff46de 257px,#ff38c2 268px,#ff2191 294px,#ff0e6a 326px,#ff0049 365px)"></i>
<i style="background:linear-gradient(90deg,#07f 151px,#0276ff 154px,#1a73ff 165px,#6967ff 197px,#ac5dff 221px,#ff51fe 247px,#ff42df 257px,#ff36c5 267px,#ff2095 292px,#ff0e6d 323px,#ff004e 360px)"></i>
<i style="background:linear-gradient(90deg,#0074ff 150px,#0173ff 153px,#1770ff 163px,#6963ff 197px,#b059ff 222px,#ff4cfe 247px,#ff3fdf 257px,#ff33c6 267px,#ff1e98 291px,#ff0d72 320px,#ff0051 356px)"></i>
<i style="background:linear-gradient(90deg,#0071ff 149px,#0070ff 152px,#146dff 161px,#6860ff 196px,#b055ff 222px,#ff48fe 247px,#ff3be0 257px,#ff30c6 267px,#ff1c9a 290px,#ff0c75 318px,#ff0056 351px)"></i>
<i style="background:linear-gradient(90deg,#006dff 149px,#026cff 152px,#1e68ff 165px,#6b5cff 197px,#b350ff 223px,#ff45ff 247px,#ff2ec9 266px,#ff1b9e 288px,#ff0c7a 314px,#ff005b 346px)"></i>
<i style="background:linear-gradient(90deg,#006aff 148px,#0169ff 151px,#1b65ff 163px,#6c58ff 197px,#b44dff 223px,#ff41ff 247px,#ff2ccc 265px,#ff1aa2 286px,#ff0b7e 311px,#ff0060 341px)"></i>
<i style="background:linear-gradient(90deg,#0067ff 147px,#0166ff 150px,#1862ff 161px,#6a55ff 196px,#b149ff 222px,#fe3dff 247px,#ff29cd 265px,#ff18a5 285px,#ff0a82 309px,#ff0064 337px)"></i>
<i style="background:linear-gradient(90deg,#0064ff 146px,#0063ff 149px,#1560ff 159px,#6852ff 195px,#b146ff 222px,#fe39ff 247px,#ff26d0 264px,#ff17a9 283px,#ff0a86 306px,#ff0069 332px)"></i>
<i style="background:linear-gradient(90deg,#0061ff 146px,#0260ff 149px,#1d5bff 162px,#694eff 195px,#ac43ff 220px,#ff34fd 248px,#ff23d1 264px,#ff15ac 282px,#ff098b 303px,#ff006f 327px)"></i>
<i style="background:linear-gradient(90deg,#005eff 145px,#015dff 148px,#1859ff 159px,#684bff 194px,#ac3fff 220px,#ff30fe 248px,#ff21d4 263px,#ff14b0 280px,#ff0890 300px,#ff0074 323px)"></i>
<i style="background:linear-gradient(90deg,#005bff 144px,#005aff 147px,#1756ff 158px,#6848ff 194px,#af3bff 221px,#ff2dfe 248px,#ff1fd7 262px,#ff13b4 278px,#ff0895 297px,#ff007a 318px)"></i>
<i style="background:linear-gradient(90deg,#0058ff 143px,#0057ff 146px,#1454ff 156px,#6745ff 193px,#af38ff 221px,#ff29fe 248px,#ff1cd7 262px,#ff11b7 277px,#ff079a 294px,#ff0081 313px)"></i>
<i style="background:linear-gradient(90deg,#05f 143px,#0154ff 146px,#1e4fff 160px,#6c41ff 195px,#b234ff 222px,#ff26ff 248px,#ff1adb 261px,#ff10bc 275px,#ff069f 291px,#f08 308px)"></i>
<i style="background:linear-gradient(90deg,#0052ff 142px,#0151ff 145px,#1b4dff 158px,#6b3eff 194px,#b331ff 222px,#f2f 248px,#ff18de 260px,#ff0ec0 273px,#ff06a5 288px,#ff008e 304px)"></i>
<i style="background:linear-gradient(90deg,#0050ff 141px,#004fff 144px,#184aff 156px,#693bff 193px,#b02eff 221px,#fe1fff 248px,#ff15de 260px,#ff0dc5 271px,#ff0095 299px)"></i>
<i style="background:linear-gradient(90deg,#004dff 141px,#024cff 144px,#1f46ff 159px,#6c37ff 194px,#b32aff 222px,#fe1cff 248px,#ff0bc8 270px,#ff009d 294px)"></i>
<i style="background:linear-gradient(90deg,#004aff 140px,#0149ff 143px,#1c44ff 157px,#6b35ff 193px,#b127ff 221px,#fe18ff 248px,#ff0acd 268px,#ff00a6 289px)"></i>
<i style="background:linear-gradient(90deg,#0048ff 139px,#0147ff 142px,#1a42ff 155px,#6932ff 192px,#b124ff 221px,#fd15ff 248px,#ff08d2 266px,#ff00ad 285px)"></i>
<i style="background:linear-gradient(90deg,#0045ff 138px,#04f 141px,#1540ff 152px,#6830ff 191px,#af22ff 220px,#fd12ff 248px,#ff06d4 265px,#ff00b6 280px)"></i>
<i style="background:linear-gradient(90deg,#0043ff 138px,#0141ff 141px,#203bff 157px,#6d2cff 193px,#b21eff 221px,#fd0fff 248px,#ff00c0 275px)"></i>
<i style="background:linear-gradient(90deg,#0040ff 137px,#013fff 140px,#1d39ff 155px,#6b29ff 192px,#b21bff 221px,#ff0bff 249px,#ff00cb 270px)"></i>
<i style="background:linear-gradient(90deg,#003eff 136px,#003dff 139px,#1938ff 152px,#6a27ff 191px,#b218ff 221px,#ff08ff 249px,#ff00d4 266px)"></i>
<i style="background:linear-gradient(90deg,#003bff 135px,#003aff 138px,#1636ff 150px,#6825ff 190px,#b016ff 220px,#ff05ff 249px,#ff00e0 261px)"></i>
<i style="background:linear-gradient(90deg,#0039ff 135px,#0138ff 138px,#2131ff 155px,#6d21ff 192px,#b212ff 221px,#fe02ff 249px,#ff00ed 256px)"></i>
<i style="background:linear-gradient(90deg,#0037ff 134px,#0135ff 137px,#1731ff 149px,#6121ff 186px,#ae10ff 219px,#fe00ff 249px,#ff00f8 252px)"></i>
<i style="background:linear-gradient(90deg,#0034ff 133px,#03f 136px,#182eff 149px,#661dff 188px,#ab0eff 218px,#f800ff 247px)"></i>
<i style="background:linear-gradient(90deg,#0032ff 133px,#0131ff 136px,#1d2bff 151px,#651bff 187px,#a40dff 215px,#ea00ff 242px)"></i>
<i style="background:linear-gradient(90deg,#0030ff 132px,#012fff 135px,#152aff 146px,#5d1aff 183px,#9b0cff 211px,#dc00ff 237px)"></i>
<i style="background:linear-gradient(90deg,#002eff 131px,#002cff 134px,#0d2aff 141px,#5519ff 179px,#920cff 207px,#d200ff 233px)"></i>
<i style="background:linear-gradient(90deg,#002cff 130px,#002aff 133px,#0529ff 136px,#4e19ff 175px,#870cff 202px,#c500ff 228px)"></i>
<i style="background:linear-gradient(90deg,#0029ff 130px,#0a26ff 138px,#4b17ff 173px,#810bff 199px,#b900ff 223px)"></i>
<i style="background:linear-gradient(90deg,#0027ff 129px,#0126ff 132px,#4416ff 169px,#770bff 194px,#ad00ff 218px)"></i>
<i style="background:linear-gradient(90deg,#0025ff 128px,#0024ff 131px,#3d16ff 165px,#a400ff 214px)"></i>
<i style="background:linear-gradient(90deg,#0023ff 127px,#0122ff 131px,#3715ff 161px,#90f 209px)"></i>
<i style="background:linear-gradient(90deg,#0021ff 127px,#0120ff 130px,#3414ff 159px,#8e00ff 204px)"></i>
<i style="background:linear-gradient(90deg,#001fff 126px,#011eff 129px,#2d13ff 155px,#8400ff 199px)"></i>
<i style="background:linear-gradient(90deg,#001dff 125px,#001cff 128px,#2712ff 151px,#7c00ff 195px)"></i>
<i style="background:linear-gradient(90deg,#001bff 125px,#011aff 128px,#2711ff 150px,#7200ff 190px)"></i>
<i style="background:linear-gradient(90deg,#0019ff 124px,#0118ff 127px,#1f10ff 145px,#6900ff 185px)"></i>
<i style="background:linear-gradient(90deg,#0017ff 123px,#0016ff 126px,#1710ff 140px,#6200ff 181px)"></i>
<i style="background:linear-gradient(90deg,#0015ff 122px,#0014ff 125px,#0e11ff 134px,#5900ff 176px)"></i>
<i style="background:linear-gradient(90deg,#0013ff 122px,#0112ff 125px,#100fff 134px,#5000ff 171px)"></i>
<i style="background:linear-gradient(90deg,#0012ff 121px,#050fff 127px,#4800ff 166px)"></i>
<i style="background:linear-gradient(90deg,#0010ff 120px,#000fff 123px,#4100ff 162px)"></i>
<i style="background:linear-gradient(90deg,#000eff 119px,#010dff 123px,#3900ff 157px)"></i>
<i style="background:linear-gradient(90deg,#000cff 119px,#010bff 122px,#3200ff 152px)"></i>
<i style="background:linear-gradient(90deg,#000bff 118px,#0009ff 121px,#2a00ff 147px)"></i>
<i style="background:linear-gradient(90deg,#0009ff 117px,#0008ff 120px,#2400ff 143px)"></i>
<i style="background:linear-gradient(90deg,#0007ff 117px,#0106ff 120px,#1d00ff 138px)"></i>
<i style="background:linear-gradient(90deg,#0005ff 116px,#0104ff 119px,#1600ff 133px)"></i>
<i style="background:linear-gradient(90deg,#0004ff 115px,#0003ff 118px,#0f00ff 128px)"></i>
<i style="background:linear-gradient(90deg,#0002ff 114px,#0001ff 117px,#0a00ff 124px)"></i>
<i style="background:linear-gradient(90deg,#0001ff 114px,#0400ff 119px)"></i>
</div></div>
</div>
<svg class="a" style="left:0;top:0" width="1715" height="881" viewBox="0 0 1715 881"><rect x="1280.1" y="275.5" width="13.8" height="13.8" fill="none" stroke="#fff" stroke-width="1.6"/><rect x="1335.2" y="274.0" width="13.8" height="13.8" fill="none" stroke="#fff" stroke-width="1.6"/><rect x="1389.7" y="285.6" width="13.8" height="13.8" fill="none" stroke="#fff" stroke-width="1.6"/><rect x="1410.7" y="306.7" width="13.8" height="13.8" fill="none" stroke="#fff" stroke-width="1.6"/><rect x="1441.5" y="326.1" width="13.8" height="13.8" fill="none" stroke="#fff" stroke-width="1.6"/><rect x="1307.1" y="313.5" width="13.8" height="13.8" fill="none" stroke="#fff" stroke-width="1.6"/><rect x="1246.6" y="352.6" width="13.8" height="13.8" fill="none" stroke="#fff" stroke-width="1.6"/><rect x="1353.1" y="351.1" width="13.8" height="13.8" fill="none" stroke="#fff" stroke-width="1.6"/><rect x="1337.6" y="355.5" width="13.8" height="13.8" fill="none" stroke="#fff" stroke-width="1.6"/><rect x="1402.1" y="380.6" width="13.8" height="13.8" fill="none" stroke="#fff" stroke-width="1.6"/><rect x="1459.7" y="378.1" width="13.8" height="13.8" fill="none" stroke="#fff" stroke-width="1.6"/><rect x="1204.5" y="407.5" width="13.8" height="13.8" fill="none" stroke="#fff" stroke-width="1.6"/><rect x="1236.5" y="408.5" width="13.8" height="13.8" fill="none" stroke="#fff" stroke-width="1.6"/><rect x="1250.4" y="416.8" width="13.8" height="13.8" fill="none" stroke="#fff" stroke-width="1.6"/><rect x="1267.5" y="435.5" width="13.8" height="13.8" fill="none" stroke="#fff" stroke-width="1.6"/><rect x="1211.6" y="453.5" width="13.8" height="13.8" fill="none" stroke="#fff" stroke-width="1.6"/><rect x="1192.1" y="483.0" width="13.8" height="13.8" fill="none" stroke="#fff" stroke-width="1.6"/><rect x="1333.6" y="420.0" width="13.8" height="13.8" fill="none" stroke="#fff" stroke-width="1.6"/><rect x="1286.1" y="371.1" width="14" height="14" fill="none" stroke="#000" stroke-width="2"/><circle cx="1293.2" cy="377.4" r="4.2" fill="#f9fffd" stroke="#000" stroke-width="1.2"/><circle cx="1292.6" cy="377.6" r="4.2" fill="#e1e8eb" stroke="#000" stroke-width="1.2"/><circle cx="1292.0" cy="377.8" r="4.2" fill="#ccd3d3" stroke="#000" stroke-width="1.2"/><circle cx="1291.2" cy="378.1" r="4.2" fill="#b2b9b9" stroke="#000" stroke-width="1.2"/><circle cx="1288.6" cy="379.1" r="4.2" fill="#9ea0a0" stroke="#000" stroke-width="1.2"/><circle cx="1302.9" cy="297.9" r="4.2" fill="#559655" stroke="#000" stroke-width="1.2"/><circle cx="1346.0" cy="292.0" r="4.2" fill="#a0b94b" stroke="#000" stroke-width="1.2"/><circle cx="1391.0" cy="298.9" r="4.2" fill="#ebc828" stroke="#000" stroke-width="1.2"/><circle cx="1404.9" cy="317.4" r="4.2" fill="#e1a537" stroke="#000" stroke-width="1.2"/><circle cx="1424.9" cy="333.0" r="4.2" fill="#d77d32" stroke="#000" stroke-width="1.2"/><circle cx="1315.1" cy="329.1" r="4.2" fill="#5f6e4b" stroke="#000" stroke-width="1.2"/><circle cx="1263.0" cy="363.9" r="4.2" fill="#6ebeaa" stroke="#000" stroke-width="1.2"/><circle cx="1333.4" cy="362.0" r="4.2" fill="#c39682" stroke="#000" stroke-width="1.2"/><circle cx="1345.1" cy="359.5" r="4.2" fill="#6e5046" stroke="#000" stroke-width="1.2"/><circle cx="1378.0" cy="381.9" r="4.2" fill="#c35a69" stroke="#000" stroke-width="1.2"/><circle cx="1427.5" cy="379.0" r="4.2" fill="#aa3241" stroke="#000" stroke-width="1.2"/><circle cx="1222.9" cy="412.9" r="4.2" fill="#008596" stroke="#000" stroke-width="1.2"/><circle cx="1244.9" cy="412.9" r="4.2" fill="#647da0" stroke="#000" stroke-width="1.2"/><circle cx="1253.5" cy="418.4" r="4.2" fill="#827daf" stroke="#000" stroke-width="1.2"/><circle cx="1245.1" cy="430.9" r="4.2" fill="#000000" stroke="#000" stroke-width="1.2"/><circle cx="1262.9" cy="432.4" r="4.2" fill="#5f3c69" stroke="#000" stroke-width="1.2"/><circle cx="1218.5" cy="447.9" r="4.2" fill="#555fa5" stroke="#000" stroke-width="1.2"/><circle cx="1200.1" cy="471.9" r="4.2" fill="#3c3c96" stroke="#000" stroke-width="1.2"/><circle cx="1317.1" cy="416.9" r="4.2" fill="#b95596" stroke="#000" stroke-width="1.2"/></svg>
<span class="t" style="left:1045.46px;top:582.94px;font-size:15.2px;line-height:17.46px;color:#d8d8d8;">0</span>
<span class="t" style="left:1034.92px;top:567.04px;font-size:15.2px;line-height:17.46px;color:#d8d8d8;">0</span>
<span class="t" style="left:1116.80px;top:582.94px;font-size:15.2px;line-height:17.46px;color:#d8d8d8;transform:scaleX(0.9670);transform-origin:50% 0;">0,1</span>
<span class="t" style="left:1022.20px;top:507.64px;font-size:15.2px;line-height:17.46px;color:#d8d8d8;transform:scaleX(0.9670);transform-origin:100% 0;">0,1</span>
<span class="t" style="left:1194.50px;top:582.94px;font-size:15.2px;line-height:17.46px;color:#d8d8d8;transform:scaleX(0.9670);transform-origin:50% 0;">0,2</span>
<span class="t" style="left:1022.20px;top:448.24px;font-size:15.2px;line-height:17.46px;color:#d8d8d8;transform:scaleX(0.9670);transform-origin:100% 0;">0,2</span>
<span class="t" style="left:1272.20px;top:582.94px;font-size:15.2px;line-height:17.46px;color:#d8d8d8;transform:scaleX(0.9670);transform-origin:50% 0;">0,3</span>
<span class="t" style="left:1022.20px;top:388.84px;font-size:15.2px;line-height:17.46px;color:#d8d8d8;transform:scaleX(0.9670);transform-origin:100% 0;">0,3</span>
<span class="t" style="left:1349.90px;top:582.94px;font-size:15.2px;line-height:17.46px;color:#d8d8d8;transform:scaleX(0.9670);transform-origin:50% 0;">0,4</span>
<span class="t" style="left:1022.20px;top:329.44px;font-size:15.2px;line-height:17.46px;color:#d8d8d8;transform:scaleX(0.9670);transform-origin:100% 0;">0,4</span>
<span class="t" style="left:1427.60px;top:582.94px;font-size:15.2px;line-height:17.46px;color:#d8d8d8;transform:scaleX(0.9670);transform-origin:50% 0;">0,5</span>
<span class="t" style="left:1022.20px;top:270.04px;font-size:15.2px;line-height:17.46px;color:#d8d8d8;transform:scaleX(0.9670);transform-origin:100% 0;">0,5</span>
<span class="t" style="left:1505.30px;top:582.94px;font-size:15.2px;line-height:17.46px;color:#d8d8d8;transform:scaleX(0.9670);transform-origin:50% 0;">0,6</span>
<span class="t" style="left:1022.20px;top:210.64px;font-size:15.2px;line-height:17.46px;color:#d8d8d8;transform:scaleX(0.9670);transform-origin:100% 0;">0,6</span>
<span class="t" style="left:1583.00px;top:582.94px;font-size:15.2px;line-height:17.46px;color:#d8d8d8;transform:scaleX(0.9670);transform-origin:50% 0;">0,7</span>
<span class="t" style="left:1022.20px;top:151.24px;font-size:15.2px;line-height:17.46px;color:#d8d8d8;transform:scaleX(0.9670);transform-origin:100% 0;">0,7</span>
<span class="t" style="left:1660.70px;top:582.94px;font-size:15.2px;line-height:17.46px;color:#d8d8d8;transform:scaleX(0.9670);transform-origin:50% 0;">0,8</span>
<span class="t" style="left:1022.20px;top:91.84px;font-size:15.2px;line-height:17.46px;color:#d8d8d8;transform:scaleX(0.9670);transform-origin:100% 0;">0,8</span>
<svg class="a" style="left:0;top:0" width="1715" height="881" viewBox="0 0 1715 881"><rect x="1049.00" y="74.00" width="654.70" height="1.40" fill="#8e8e8e"/><rect x="1049.00" y="574.30" width="654.70" height="1.40" fill="#8e8e8e"/><rect x="1049.00" y="74.00" width="1.40" height="501.70" fill="#8e8e8e"/><rect x="1702.30" y="74.00" width="1.40" height="501.70" fill="#8e8e8e"/><rect x="1049.45" y="575.00" width="1.50" height="5.50" fill="#e0e0e0"/><rect x="1043.70" y="575.00" width="6.00" height="1.60" fill="#e0e0e0"/><rect x="1127.15" y="575.00" width="1.50" height="5.50" fill="#e0e0e0"/><rect x="1043.70" y="515.60" width="6.00" height="1.00" fill="#e0e0e0"/><rect x="1204.85" y="575.00" width="1.50" height="5.50" fill="#e0e0e0"/><rect x="1043.70" y="456.20" width="6.00" height="1.00" fill="#e0e0e0"/><rect x="1282.55" y="575.00" width="1.50" height="5.50" fill="#e0e0e0"/><rect x="1043.70" y="396.80" width="6.00" height="1.00" fill="#e0e0e0"/><rect x="1360.25" y="575.00" width="1.50" height="5.50" fill="#e0e0e0"/><rect x="1043.70" y="337.40" width="6.00" height="1.00" fill="#e0e0e0"/><rect x="1437.95" y="575.00" width="1.50" height="5.50" fill="#e0e0e0"/><rect x="1043.70" y="278.00" width="6.00" height="1.00" fill="#e0e0e0"/><rect x="1515.65" y="575.00" width="1.50" height="5.50" fill="#e0e0e0"/><rect x="1043.70" y="218.60" width="6.00" height="1.00" fill="#e0e0e0"/><rect x="1593.35" y="575.00" width="1.50" height="5.50" fill="#e0e0e0"/><rect x="1043.70" y="159.20" width="6.00" height="1.00" fill="#e0e0e0"/><rect x="1671.05" y="575.00" width="1.50" height="5.50" fill="#e0e0e0"/><rect x="1043.70" y="99.80" width="6.00" height="1.00" fill="#e0e0e0"/></svg>
<div class="a" style="left:1419.3px;top:535px;width:281px;height:28px;background:#333"></div>
<span class="t" style="left:1451.00px;top:536.79px;font-size:21px;line-height:24.13px;color:#f4f4f4;transform:scaleX(0.9640);transform-origin:0 0;">RGB Triplet: 0, 133, 163</span>
<div class="a" style="left:1503.8px;top:79.3px;width:196px;height:153.3px;background:#333"></div>
<div class="a" style="left:1505.8px;top:81.6px;width:191.6px;height:148.9px;background:#8e8e8e"></div>
<div class="a" style="left:1507.0px;top:82.8px;width:189.2px;height:146.5px;overflow:hidden">
<div class="h">
<i style="background:linear-gradient(90deg,#007999 -1px,#007699 120px,#177599 191px)"></i>
<i style="background:linear-gradient(90deg,#007899 -1px,#007599 119px,#187499 191px)"></i>
<i style="background:linear-gradient(90deg,#007799 -1px,#007599 118px,#187399 191px)"></i>
<i style="background:linear-gradient(90deg,#007699 -1px,#007499 117px,#187299 191px)"></i>
<i style="background:linear-gradient(90deg,#007599 -1px,#007399 116px,#197199 191px)"></i>
<i style="background:linear-gradient(90deg,#007499 -1px,#007299 115px,#197099 191px)"></i>
<i style="background:linear-gradient(90deg,#007399 -1px,#007199 114px,#196f99 191px)"></i>
<i style="background:linear-gradient(90deg,#007399 -1px,#007099 113px,#196e99 191px)"></i>
<i style="background:linear-gradient(90deg,#007299 -1px,#006f99 112px,#1a6d99 191px)"></i>
<i style="background:linear-gradient(90deg,#007199 -1px,#006e99 111px,#1a6c99 191px)"></i>
<i style="background:linear-gradient(90deg,#007099 -1px,#006e99 110px,#1a6c99 191px)"></i>
<i style="background:linear-gradient(90deg,#006f99 -1px,#006d99 108px,#1b6b99 191px)"></i>
<i style="background:linear-gradient(90deg,#006e99 -1px,#006c99 107px,#1b6a99 191px)"></i>
<i style="background:linear-gradient(90deg,#006e99 -1px,#006b99 106px,#1b6999 191px)"></i>
<i style="background:linear-gradient(90deg,#006d99 -1px,#006a99 105px,#1b6899 191px)"></i>
<i style="background:linear-gradient(90deg,#006c99 -1px,#006999 104px,#1c6799 191px)"></i>
<i style="background:linear-gradient(90deg,#006b99 -1px,#006999 103px,#1c6699 191px)"></i>
<i style="background:linear-gradient(90deg,#006a99 -1px,#006899 102px,#1c6599 191px)"></i>
<i style="background:linear-gradient(90deg,#006a99 -1px,#006799 101px,#1c6499 191px)"></i>
<i style="background:linear-gradient(90deg,#006999 -1px,#006699 100px,#1d6499 191px)"></i>
<i style="background:linear-gradient(90deg,#006899 -1px,#006599 99px,#1d6399 191px)"></i>
<i style="background:linear-gradient(90deg,#006799 -1px,#006599 98px,#1d6299 191px)"></i>
<i style="background:linear-gradient(90deg,#006699 -1px,#006499 97px,#1d6199 191px)"></i>
<i style="background:linear-gradient(90deg,#006699 -1px,#006399 96px,#1e6099 191px)"></i>
<i style="background:linear-gradient(90deg,#006599 -1px,#006299 95px,#1e5f99 191px)"></i>
<i style="background:linear-gradient(90deg,#006499 -1px,#006199 93px,#1e5e99 191px)"></i>
<i style="background:linear-gradient(90deg,#006399 -1px,#006199 92px,#1e5e99 191px)"></i>
<i style="background:linear-gradient(90deg,#006399 -1px,#006099 91px,#1f5d99 191px)"></i>
<i style="background:linear-gradient(90deg,#006299 -1px,#005f99 90px,#1f5c99 191px)"></i>
<i style="background:linear-gradient(90deg,#006199 -1px,#005e99 89px,#1f5b99 191px)"></i>
<i style="background:linear-gradient(90deg,#006099 -1px,#005e99 88px,#1f5a99 191px)"></i>
<i style="background:linear-gradient(90deg,#005f99 -1px,#005d99 87px,#205999 191px)"></i>
<i style="background:linear-gradient(90deg,#005f99 -1px,#005c99 86px,#205999 191px)"></i>
<i style="background:linear-gradient(90deg,#005e99 -1px,#005b99 85px,#205899 191px)"></i>
<i style="background:linear-gradient(90deg,#005d99 -1px,#005b99 84px,#205799 191px)"></i>
<i style="background:linear-gradient(90deg,#005c99 -1px,#005a99 83px,#215699 191px)"></i>
<i style="background:linear-gradient(90deg,#005c99 -1px,#005999 82px,#215599 191px)"></i>
<i style="background:linear-gradient(90deg,#005b99 -1px,#005899 81px,#215599 191px)"></i>
<i style="background:linear-gradient(90deg,#005a99 -1px,#005899 80px,#215499 191px)"></i>
<i style="background:linear-gradient(90deg,#005a99 -1px,#005799 78px,#225399 191px)"></i>
<i style="background:linear-gradient(90deg,#005999 -1px,#005699 77px,#225299 191px)"></i>
<i style="background:linear-gradient(90deg,#005899 -1px,#005699 76px,#225199 191px)"></i>
<i style="background:linear-gradient(90deg,#005799 -1px,#005599 75px,#225199 191px)"></i>
<i style="background:linear-gradient(90deg,#005799 -1px,#005499 74px,#235099 191px)"></i>
<i style="background:linear-gradient(90deg,#005699 -1px,#005499 73px,#234f99 191px)"></i>
<i style="background:linear-gradient(90deg,#005599 -1px,#005399 72px,#234e99 191px)"></i>
<i style="background:linear-gradient(90deg,#005599 -1px,#005299 71px,#234e99 191px)"></i>
<i style="background:linear-gradient(90deg,#005499 -1px,#005199 70px,#244d99 191px)"></i>
<i style="background:linear-gradient(90deg,#005399 -1px,#005199 69px,#244c99 191px)"></i>
</div>
<div class="h" style="clip-path:polygon(122.7px -5px,194.2px -5px,194.2px 151.5px,66.5px 151.5px)">
<i style="background:linear-gradient(90deg,#00c5ff 117px,#27c3ff 191px)"></i>
<i style="background:linear-gradient(90deg,#00c4ff 116px,#28c1ff 191px)"></i>
<i style="background:linear-gradient(90deg,#00c2ff 115px,#28c0ff 191px)"></i>
<i style="background:linear-gradient(90deg,#00c1ff 114px,#28beff 191px)"></i>
<i style="background:linear-gradient(90deg,#00bfff 113px,#29bcff 191px)"></i>
<i style="background:linear-gradient(90deg,#00beff 112px,#29bbff 191px)"></i>
<i style="background:linear-gradient(90deg,#00bdff 111px,#2ab9ff 191px)"></i>
<i style="background:linear-gradient(90deg,#00bbff 110px,#2ab8ff 191px)"></i>
<i style="background:linear-gradient(90deg,#00baff 109px,#2bb6ff 191px)"></i>
<i style="background:linear-gradient(90deg,#00b8ff 108px,#2bb5ff 191px)"></i>
<i style="background:linear-gradient(90deg,#00b7ff 107px,#2cb3ff 191px)"></i>
<i style="background:linear-gradient(90deg,#00b5ff 106px,#2cb2ff 191px)"></i>
<i style="background:linear-gradient(90deg,#00b4ff 104px,#2db0ff 191px)"></i>
<i style="background:linear-gradient(90deg,#00b3ff 103px,#2dafff 191px)"></i>
<i style="background:linear-gradient(90deg,#00b1ff 102px,#2eadff 191px)"></i>
<i style="background:linear-gradient(90deg,#00b0ff 101px,#2eacff 191px)"></i>
<i style="background:linear-gradient(90deg,#00aeff 100px,#2eaaff 191px)"></i>
<i style="background:linear-gradient(90deg,#00adff 99px,#2fa9ff 191px)"></i>
<i style="background:linear-gradient(90deg,#00acff 98px,#2fa7ff 191px)"></i>
<i style="background:linear-gradient(90deg,#00aaff 97px,#30a6ff 191px)"></i>
<i style="background:linear-gradient(90deg,#00a9ff 96px,#30a4ff 191px)"></i>
<i style="background:linear-gradient(90deg,#00a8ff 95px,#31a3ff 191px)"></i>
<i style="background:linear-gradient(90deg,#00a6ff 94px,#31a2ff 191px)"></i>
<i style="background:linear-gradient(90deg,#00a5ff 93px,#32a0ff 191px)"></i>
<i style="background:linear-gradient(90deg,#00a4ff 91px,#329fff 191px)"></i>
<i style="background:linear-gradient(90deg,#00a3ff 90px,#329dff 191px)"></i>
<i style="background:linear-gradient(90deg,#00a1ff 89px,#339cff 191px)"></i>
<i style="background:linear-gradient(90deg,#00a0ff 88px,#339bff 191px)"></i>
<i style="background:linear-gradient(90deg,#009fff 87px,#3499ff 191px)"></i>
<i style="background:linear-gradient(90deg,#009dff 86px,#3498ff 191px)"></i>
<i style="background:linear-gradient(90deg,#009cff 85px,#3496ff 191px)"></i>
<i style="background:linear-gradient(90deg,#009bff 84px,#3595ff 191px)"></i>
<i style="background:linear-gradient(90deg,#009aff 83px,#3594ff 191px)"></i>
<i style="background:linear-gradient(90deg,#0098ff 82px,#3692ff 191px)"></i>
<i style="background:linear-gradient(90deg,#0097ff 81px,#3691ff 191px)"></i>
<i style="background:linear-gradient(90deg,#0096ff 80px,#3790ff 191px)"></i>
<i style="background:linear-gradient(90deg,#0095ff 79px,#378eff 191px)"></i>
<i style="background:linear-gradient(90deg,#0094ff 77px,#378dff 191px)"></i>
<i style="background:linear-gradient(90deg,#0092ff 76px,#388cff 191px)"></i>
<i style="background:linear-gradient(90deg,#0091ff 75px,#388aff 191px)"></i>
<i style="background:linear-gradient(90deg,#0090ff 74px,#3889ff 191px)"></i>
<i style="background:linear-gradient(90deg,#008fff 73px,#3988ff 191px)"></i>
<i style="background:linear-gradient(90deg,#008eff 72px,#3987ff 191px)"></i>
<i style="background:linear-gradient(90deg,#008dff 71px,#3a85ff 191px)"></i>
<i style="background:linear-gradient(90deg,#008bff 70px,#3a84ff 191px)"></i>
<i style="background:linear-gradient(90deg,#008aff 69px,#3a83ff 191px)"></i>
<i style="background:linear-gradient(90deg,#0089ff 68px,#3b81ff 191px)"></i>
<i style="background:linear-gradient(90deg,#0088ff 67px,#3b80ff 191px)"></i>
<i style="background:linear-gradient(90deg,#0087ff 66px,#3c7fff 191px)"></i>
</div>
</div>
<svg class="a" style="left:0;top:0" width="1715" height="881" viewBox="0 0 1715 881"><rect x="1594.3" y="148.5" width="13.8" height="13.8" fill="none" stroke="#fff" stroke-width="1.6"/><circle cx="1653" cy="148" r="4.2" fill="#008596" stroke="#000" stroke-width="1.2"/></svg>
</body></html>
